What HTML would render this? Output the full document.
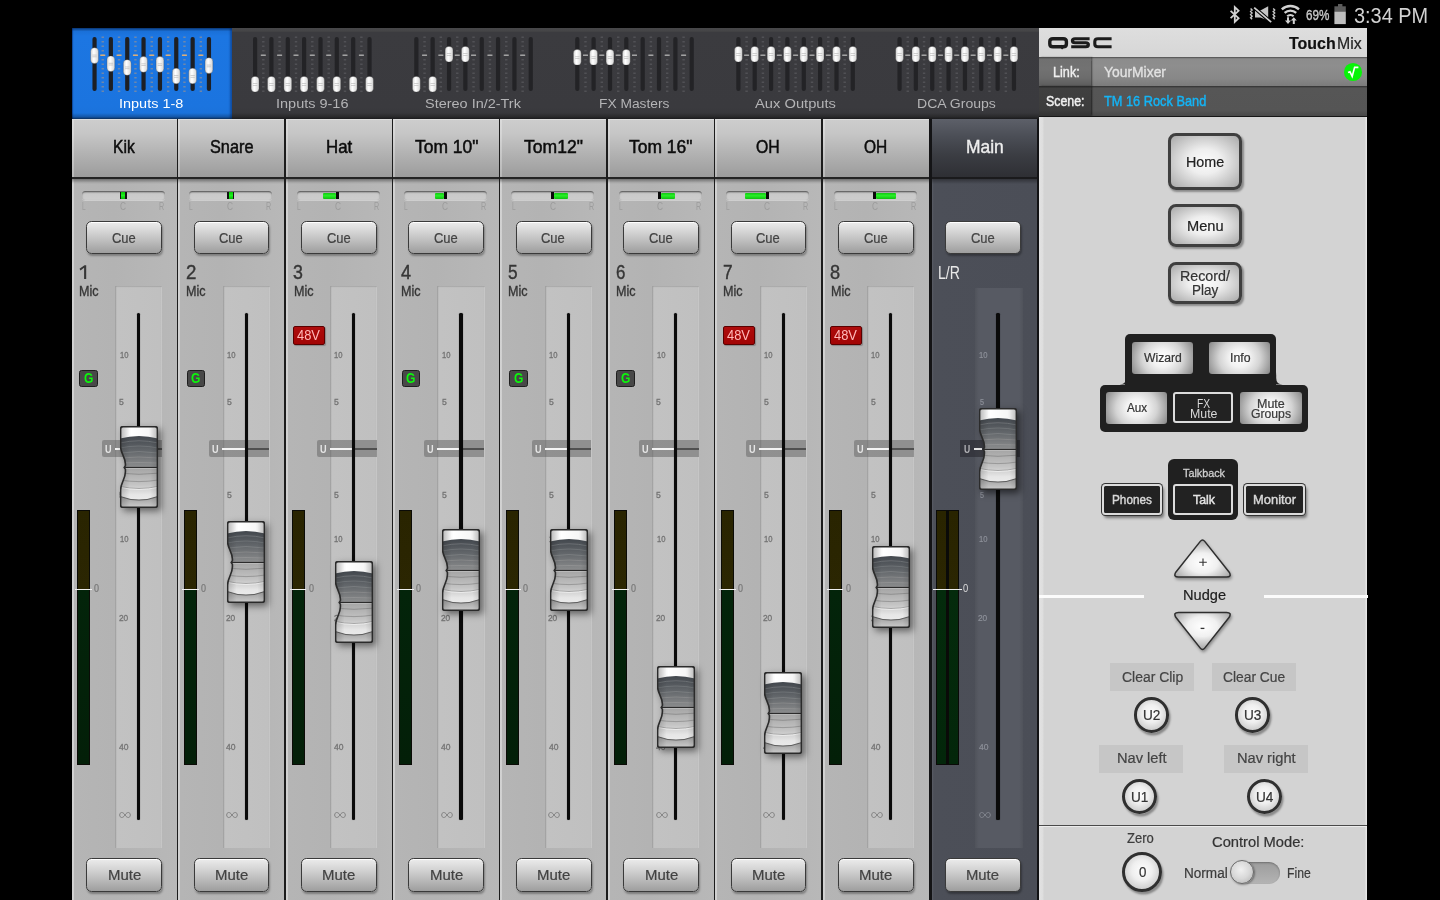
<!DOCTYPE html>
<html><head><meta charset="utf-8"><title>TouchMix</title>
<style>
html,body{margin:0;padding:0;background:#000;}
body{width:1440px;height:900px;position:relative;overflow:hidden;font-family:"Liberation Sans",sans-serif;}
.t{position:absolute;white-space:nowrap;line-height:1;transform-origin:0 0;-webkit-text-stroke:.22px;}
.abs{position:absolute;}
.btn{position:absolute;box-sizing:border-box;border:1.7px solid #3a3a3a;border-radius:5.5px;
 background:linear-gradient(#ececec 0%,#d2d2d2 35%,#9e9e9e 100%);
 box-shadow:1px 2px 2px rgba(0,0,0,.30), inset 0 1px 0 #fff;}
.fp{position:absolute;background:linear-gradient(90deg,#b6b6b6 0,#c2c2c2 5%,#c0c0c0 95%,#bcbcbc 100%);box-shadow:inset 1px 1px 1px rgba(0,0,0,.13), inset -1px 0 0 rgba(255,255,255,.15);}
.fpm{position:absolute;background:linear-gradient(90deg,#50535b 0,#575a63 8%,#575a63 92%,#50535b 100%);}
.trk{position:absolute;width:3.4px;background:#0a0a0a;border-radius:1.5px;box-shadow:0 0 1px rgba(0,0,0,.6);}
.sq{position:absolute;box-sizing:border-box;border:3.8px solid #3f3f3f;border-radius:8px;
 background:radial-gradient(ellipse at 50% 50%,#fbfbfb 0%,#eeeeee 35%,#a9a9a9 100%);
 box-shadow:1.5px 2px 2px rgba(0,0,0,.35);}
.lb{position:absolute;border-radius:3px;
 background:radial-gradient(ellipse 56% 95% at 50% 50%,#ffffff 0%,#f2f2f2 30%,#d4d4d4 60%,#8c8c8c 100%);}
.db{position:absolute;box-sizing:border-box;background:#222;border:2px solid #dcdcdc;border-radius:3px;}
.dbo{position:absolute;box-sizing:border-box;background:#222;border:2px solid #dcdcdc;border-radius:3.5px;
 box-shadow:0 0 0 1px #333, 2px 3px 3px rgba(0,0,0,.45);}
.lab{position:absolute;background:#c6c6c6;}
.circ{position:absolute;box-sizing:border-box;border:3.3px solid #2f2f2f;border-radius:50%;
 background:radial-gradient(circle at 50% 45%,#fdfdfd 0%,#efefef 40%,#b6b6b6 100%);
 box-shadow:1.5px 2.5px 2px rgba(0,0,0,.35);}
</style></head><body>

<svg width="0" height="0" style="position:absolute">
<defs>
 <linearGradient id="kd" x1="0" y1="0" x2="0" y2="1">
  <stop offset="0" stop-color="#42474d"/><stop offset=".45" stop-color="#62666a"/><stop offset="1" stop-color="#8c8d8e"/>
 </linearGradient>
 <linearGradient id="kl" x1="0" y1="0" x2="0" y2="1">
  <stop offset="0" stop-color="#a4a4a4"/><stop offset=".5" stop-color="#c4c4c4"/><stop offset=".8" stop-color="#e6e6e6"/><stop offset="1" stop-color="#ececec"/>
 </linearGradient>
 <linearGradient id="kb" x1="0" y1="0" x2="0" y2="1">
  <stop offset="0" stop-color="#9c9c9c"/><stop offset="1" stop-color="#cecece"/>
 </linearGradient>
 <linearGradient id="kc" x1="0" y1="0" x2="1" y2="0">
  <stop offset="0" stop-color="#dcdcdc"/><stop offset=".3" stop-color="#ffffff"/><stop offset=".75" stop-color="#f6f6f6"/><stop offset="1" stop-color="#d0d0d0"/>
 </linearGradient>
 <linearGradient id="ksh" x1="0" y1="0" x2="1" y2="0">
  <stop offset="0" stop-color="#000" stop-opacity=".18"/><stop offset=".25" stop-color="#000" stop-opacity="0"/>
  <stop offset=".8" stop-color="#000" stop-opacity="0"/><stop offset="1" stop-color="#000" stop-opacity=".12"/>
 </linearGradient>
 <clipPath id="kclip"><path d="M3,.6 H35 Q37.4,.6 37.4,3 V79 Q37.4,81.4 35,81.4 H3 Q.6,81.4 .6,79 V64 C.6,57 5.4,53 5.4,46 V43.4 L4.2,41.5 L5.4,39.6 V38 C5.4,31 .6,27 .6,21 V3 Q.6,.6 3,.6 Z"/></clipPath>
 <linearGradient id="mk" x1="0" y1="0" x2="1" y2="0">
  <stop offset="0" stop-color="#d8d8d8"/><stop offset=".4" stop-color="#ffffff"/><stop offset="1" stop-color="#d4d4d4"/>
 </linearGradient>
 <radialGradient id="tri" cx=".5" cy=".62" r=".6">
  <stop offset="0" stop-color="#ffffff"/><stop offset=".45" stop-color="#f0f0f0"/><stop offset="1" stop-color="#a8a8a8"/>
 </radialGradient>
 <radialGradient id="tri2" cx=".5" cy=".38" r=".6">
  <stop offset="0" stop-color="#ffffff"/><stop offset=".45" stop-color="#f0f0f0"/><stop offset="1" stop-color="#a8a8a8"/>
 </radialGradient>
</defs></svg>

<div style="position:absolute;left:0.00px;top:0.00px;width:1440.00px;height:28.00px;background:#000;"></div>
<div class="t" style="left:1306.40px;top:8.00px;font-size:14.24px;color:#c6c6c6;transform:scaleX(0.8210);-webkit-text-stroke:0.4px;">69%</div>
<div class="t" style="left:1353.70px;top:5.00px;font-size:21.80px;color:#d2d2d2;transform:scaleX(0.9127);-webkit-text-stroke:0;">3:34 PM</div>
<svg class="abs" style="left:1226px;top:2px" width="124" height="25" viewBox="0 0 124 25">
 <!-- bluetooth -->
 <path d="M4.6,8.8 L12.6,16.2 L8.8,19.8 V5.2 L12.6,8.8 L4.6,16.2" fill="none" stroke="#d2d2d2" stroke-width="1.8" stroke-linejoin="miter"/>
 <!-- vibrate / mute -->
 <path d="M24.6,6.4 l1.5,1.55 l-1.5,1.55 l1.5,1.55 l-1.5,1.55 l1.5,1.55 l-1.5,1.55 l1.5,1.55" fill="none" stroke="#c8c8c8" stroke-width="1.4"/>
 <path d="M47.2,6.4 l1.5,1.55 l-1.5,1.55 l1.5,1.55 l-1.5,1.55 l1.5,1.55 l-1.5,1.55 l1.5,1.55" fill="none" stroke="#c8c8c8" stroke-width="1.4"/>
 <path d="M29,8.6 H34.4 L42.2,4.2 V18.4 L34.4,15.6 H29 Z" fill="#c4c4c4"/>
 <path d="M28.2,5.6 L45.2,20.2" stroke="#000" stroke-width="3.8"/>
 <path d="M28.2,5.6 L45.2,20.2" stroke="#d2d2d2" stroke-width="1.7"/>
 <!-- wifi -->
 <path d="M55.8,7.4 A12.6,12.6 0 0 1 73,7.4" fill="none" stroke="#d2d2d2" stroke-width="2.4"/>
 <path d="M58.6,10.8 A8.6,8.6 0 0 1 70.2,10.8" fill="none" stroke="#d2d2d2" stroke-width="2.3"/>
 <path d="M61.2,14.2 A4.8,4.8 0 0 1 67.6,14.2" fill="none" stroke="#d2d2d2" stroke-width="2.2"/>
 <path d="M61,15.2 v3.4 h-2 l3,3.4 l3,-3.4 h-2 v-3.4 z" fill="#d2d2d2"/>
 <path d="M66.8,22 v-3.4 h-2 l3,-3.4 l3,3.4 h-2 v3.4 z" fill="#d2d2d2"/>
 <!-- battery -->
 <rect x="112" y="2" width="4.4" height="3" fill="#5c5c5c"/>
 <rect x="108.4" y="4.3" width="11.4" height="5.6" fill="#5c5c5c"/>
 <rect x="108.4" y="9.7" width="11.4" height="12.4" fill="#bebebe"/>
</svg>
<div style="position:absolute;left:72.00px;top:28.00px;width:966.70px;height:90.90px;background:linear-gradient(#474749 0,#454547 3px,#3b3b3f 4.5px,#3a3a3e 88%,#343437 100%);"></div>
<div style="position:absolute;left:72.00px;top:28.00px;width:160.00px;height:90.90px;background:linear-gradient(#0d3f80 0,#1a70d8 3.5px,#1c76e2 8px,#1b74df 86%,#1a70d8 100%);box-shadow:inset -2px 0 2px rgba(0,30,90,.45), inset 1px 0 1px rgba(0,30,90,.5);"></div>
<div style="position:absolute;left:72.00px;top:112.50px;width:966.70px;height:6.40px;background:linear-gradient(rgba(0,0,0,0),rgba(0,0,0,.22) 60%,rgba(0,0,0,.5));"></div>
<svg class="abs" style="left:72px;top:28px" width="967" height="90" viewBox="72 28 967 90"><rect x="92.45" y="37" width="4.2" height="54" rx="2" fill="#1d1f24"/><path d="M102.75,36.4 V92" stroke="#c09a78" stroke-width="2.4" stroke-dasharray="1.5 3" opacity=".5"/><rect x="100.25" y="54.5" width="5" height="1.5" fill="#e0b078" opacity=".95"/><rect x="108.75" y="37" width="4.2" height="54" rx="2" fill="#1d1f24"/><path d="M119.05,36.4 V92" stroke="#c09a78" stroke-width="2.4" stroke-dasharray="1.5 3" opacity=".5"/><rect x="116.55" y="54.5" width="5" height="1.5" fill="#e0b078" opacity=".95"/><rect x="125.15" y="37" width="4.2" height="54" rx="2" fill="#1d1f24"/><path d="M135.45,36.4 V92" stroke="#c09a78" stroke-width="2.4" stroke-dasharray="1.5 3" opacity=".5"/><rect x="132.95" y="54.5" width="5" height="1.5" fill="#e0b078" opacity=".95"/><rect x="141.45" y="37" width="4.2" height="54" rx="2" fill="#1d1f24"/><path d="M151.75,36.4 V92" stroke="#c09a78" stroke-width="2.4" stroke-dasharray="1.5 3" opacity=".5"/><rect x="149.25" y="54.5" width="5" height="1.5" fill="#e0b078" opacity=".95"/><rect x="157.85" y="37" width="4.2" height="54" rx="2" fill="#1d1f24"/><path d="M168.15,36.4 V92" stroke="#c09a78" stroke-width="2.4" stroke-dasharray="1.5 3" opacity=".5"/><rect x="165.65" y="54.5" width="5" height="1.5" fill="#e0b078" opacity=".95"/><rect x="174.15" y="37" width="4.2" height="54" rx="2" fill="#1d1f24"/><path d="M184.45,36.4 V92" stroke="#c09a78" stroke-width="2.4" stroke-dasharray="1.5 3" opacity=".5"/><rect x="181.95" y="54.5" width="5" height="1.5" fill="#e0b078" opacity=".95"/><rect x="190.55" y="37" width="4.2" height="54" rx="2" fill="#1d1f24"/><path d="M200.85,36.4 V92" stroke="#c09a78" stroke-width="2.4" stroke-dasharray="1.5 3" opacity=".5"/><rect x="198.35" y="54.5" width="5" height="1.5" fill="#e0b078" opacity=".95"/><rect x="206.85" y="37" width="4.2" height="54" rx="2" fill="#1d1f24"/><rect x="90.65" y="47.80" width="7.8" height="15.6" rx="3.7" fill="url(#mk)" stroke="#2a2a2a" stroke-opacity=".35" stroke-width=".7"/><rect x="92.35" y="54.70" width="4.4" height=".7" fill="#bdbdbd"/><rect x="92.35" y="56.50" width="4.4" height=".7" fill="#bdbdbd"/><rect x="106.95" y="55.95" width="7.8" height="15.6" rx="3.7" fill="url(#mk)" stroke="#2a2a2a" stroke-opacity=".35" stroke-width=".7"/><rect x="108.65" y="62.85" width="4.4" height=".7" fill="#bdbdbd"/><rect x="108.65" y="64.65" width="4.4" height=".7" fill="#bdbdbd"/><rect x="123.35" y="59.70" width="7.8" height="15.6" rx="3.7" fill="url(#mk)" stroke="#2a2a2a" stroke-opacity=".35" stroke-width=".7"/><rect x="125.05" y="66.60" width="4.4" height=".7" fill="#bdbdbd"/><rect x="125.05" y="68.40" width="4.4" height=".7" fill="#bdbdbd"/><rect x="139.65" y="56.60" width="7.8" height="15.6" rx="3.7" fill="url(#mk)" stroke="#2a2a2a" stroke-opacity=".35" stroke-width=".7"/><rect x="141.35" y="63.50" width="4.4" height=".7" fill="#bdbdbd"/><rect x="141.35" y="65.30" width="4.4" height=".7" fill="#bdbdbd"/><rect x="156.05" y="56.60" width="7.8" height="15.6" rx="3.7" fill="url(#mk)" stroke="#2a2a2a" stroke-opacity=".35" stroke-width=".7"/><rect x="157.75" y="63.50" width="4.4" height=".7" fill="#bdbdbd"/><rect x="157.75" y="65.30" width="4.4" height=".7" fill="#bdbdbd"/><rect x="172.35" y="68.20" width="7.8" height="15.6" rx="3.7" fill="url(#mk)" stroke="#2a2a2a" stroke-opacity=".35" stroke-width=".7"/><rect x="174.05" y="75.10" width="4.4" height=".7" fill="#bdbdbd"/><rect x="174.05" y="76.90" width="4.4" height=".7" fill="#bdbdbd"/><rect x="188.75" y="68.20" width="7.8" height="15.6" rx="3.7" fill="url(#mk)" stroke="#2a2a2a" stroke-opacity=".35" stroke-width=".7"/><rect x="190.45" y="75.10" width="4.4" height=".7" fill="#bdbdbd"/><rect x="190.45" y="76.90" width="4.4" height=".7" fill="#bdbdbd"/><rect x="205.05" y="57.80" width="7.8" height="15.6" rx="3.7" fill="url(#mk)" stroke="#2a2a2a" stroke-opacity=".35" stroke-width=".7"/><rect x="206.75" y="64.70" width="4.4" height=".7" fill="#bdbdbd"/><rect x="206.75" y="66.50" width="4.4" height=".7" fill="#bdbdbd"/><rect x="253.00" y="37" width="4.2" height="54" rx="2" fill="#232326"/><path d="M263.30,36.4 V92" stroke="#77777c" stroke-width="2.4" stroke-dasharray="1.5 3" opacity=".38"/><rect x="260.80" y="54.5" width="5" height="1.5" fill="#a8a8a8" opacity=".95"/><rect x="269.30" y="37" width="4.2" height="54" rx="2" fill="#232326"/><path d="M279.60,36.4 V92" stroke="#77777c" stroke-width="2.4" stroke-dasharray="1.5 3" opacity=".38"/><rect x="277.10" y="54.5" width="5" height="1.5" fill="#a8a8a8" opacity=".95"/><rect x="285.70" y="37" width="4.2" height="54" rx="2" fill="#232326"/><path d="M296.00,36.4 V92" stroke="#77777c" stroke-width="2.4" stroke-dasharray="1.5 3" opacity=".38"/><rect x="293.50" y="54.5" width="5" height="1.5" fill="#a8a8a8" opacity=".95"/><rect x="302.00" y="37" width="4.2" height="54" rx="2" fill="#232326"/><path d="M312.30,36.4 V92" stroke="#77777c" stroke-width="2.4" stroke-dasharray="1.5 3" opacity=".38"/><rect x="309.80" y="54.5" width="5" height="1.5" fill="#a8a8a8" opacity=".95"/><rect x="318.40" y="37" width="4.2" height="54" rx="2" fill="#232326"/><path d="M328.70,36.4 V92" stroke="#77777c" stroke-width="2.4" stroke-dasharray="1.5 3" opacity=".38"/><rect x="326.20" y="54.5" width="5" height="1.5" fill="#a8a8a8" opacity=".95"/><rect x="334.70" y="37" width="4.2" height="54" rx="2" fill="#232326"/><path d="M345.00,36.4 V92" stroke="#77777c" stroke-width="2.4" stroke-dasharray="1.5 3" opacity=".38"/><rect x="342.50" y="54.5" width="5" height="1.5" fill="#a8a8a8" opacity=".95"/><rect x="351.10" y="37" width="4.2" height="54" rx="2" fill="#232326"/><path d="M361.40,36.4 V92" stroke="#77777c" stroke-width="2.4" stroke-dasharray="1.5 3" opacity=".38"/><rect x="358.90" y="54.5" width="5" height="1.5" fill="#a8a8a8" opacity=".95"/><rect x="367.40" y="37" width="4.2" height="54" rx="2" fill="#232326"/><rect x="251.20" y="76.40" width="7.8" height="15.6" rx="3.7" fill="url(#mk)" stroke="#2a2a2a" stroke-opacity=".35" stroke-width=".7"/><rect x="252.90" y="83.30" width="4.4" height=".7" fill="#bdbdbd"/><rect x="252.90" y="85.10" width="4.4" height=".7" fill="#bdbdbd"/><rect x="267.50" y="76.40" width="7.8" height="15.6" rx="3.7" fill="url(#mk)" stroke="#2a2a2a" stroke-opacity=".35" stroke-width=".7"/><rect x="269.20" y="83.30" width="4.4" height=".7" fill="#bdbdbd"/><rect x="269.20" y="85.10" width="4.4" height=".7" fill="#bdbdbd"/><rect x="283.90" y="76.40" width="7.8" height="15.6" rx="3.7" fill="url(#mk)" stroke="#2a2a2a" stroke-opacity=".35" stroke-width=".7"/><rect x="285.60" y="83.30" width="4.4" height=".7" fill="#bdbdbd"/><rect x="285.60" y="85.10" width="4.4" height=".7" fill="#bdbdbd"/><rect x="300.20" y="76.40" width="7.8" height="15.6" rx="3.7" fill="url(#mk)" stroke="#2a2a2a" stroke-opacity=".35" stroke-width=".7"/><rect x="301.90" y="83.30" width="4.4" height=".7" fill="#bdbdbd"/><rect x="301.90" y="85.10" width="4.4" height=".7" fill="#bdbdbd"/><rect x="316.60" y="76.40" width="7.8" height="15.6" rx="3.7" fill="url(#mk)" stroke="#2a2a2a" stroke-opacity=".35" stroke-width=".7"/><rect x="318.30" y="83.30" width="4.4" height=".7" fill="#bdbdbd"/><rect x="318.30" y="85.10" width="4.4" height=".7" fill="#bdbdbd"/><rect x="332.90" y="76.40" width="7.8" height="15.6" rx="3.7" fill="url(#mk)" stroke="#2a2a2a" stroke-opacity=".35" stroke-width=".7"/><rect x="334.60" y="83.30" width="4.4" height=".7" fill="#bdbdbd"/><rect x="334.60" y="85.10" width="4.4" height=".7" fill="#bdbdbd"/><rect x="349.30" y="76.40" width="7.8" height="15.6" rx="3.7" fill="url(#mk)" stroke="#2a2a2a" stroke-opacity=".35" stroke-width=".7"/><rect x="351.00" y="83.30" width="4.4" height=".7" fill="#bdbdbd"/><rect x="351.00" y="85.10" width="4.4" height=".7" fill="#bdbdbd"/><rect x="365.60" y="76.40" width="7.8" height="15.6" rx="3.7" fill="url(#mk)" stroke="#2a2a2a" stroke-opacity=".35" stroke-width=".7"/><rect x="367.30" y="83.30" width="4.4" height=".7" fill="#bdbdbd"/><rect x="367.30" y="85.10" width="4.4" height=".7" fill="#bdbdbd"/><rect x="414.25" y="37" width="4.2" height="54" rx="2" fill="#232326"/><path d="M424.55,36.4 V92" stroke="#77777c" stroke-width="2.4" stroke-dasharray="1.5 3" opacity=".38"/><rect x="422.05" y="54.5" width="5" height="1.5" fill="#a8a8a8" opacity=".95"/><rect x="430.55" y="37" width="4.2" height="54" rx="2" fill="#232326"/><path d="M440.85,36.4 V92" stroke="#77777c" stroke-width="2.4" stroke-dasharray="1.5 3" opacity=".38"/><rect x="438.35" y="54.5" width="5" height="1.5" fill="#a8a8a8" opacity=".95"/><rect x="446.95" y="37" width="4.2" height="54" rx="2" fill="#232326"/><path d="M457.25,36.4 V92" stroke="#77777c" stroke-width="2.4" stroke-dasharray="1.5 3" opacity=".38"/><rect x="454.75" y="54.5" width="5" height="1.5" fill="#a8a8a8" opacity=".95"/><rect x="463.25" y="37" width="4.2" height="54" rx="2" fill="#232326"/><path d="M473.55,36.4 V92" stroke="#77777c" stroke-width="2.4" stroke-dasharray="1.5 3" opacity=".38"/><rect x="471.05" y="54.5" width="5" height="1.5" fill="#a8a8a8" opacity=".95"/><rect x="479.65" y="37" width="4.2" height="54" rx="2" fill="#232326"/><path d="M489.95,36.4 V92" stroke="#77777c" stroke-width="2.4" stroke-dasharray="1.5 3" opacity=".38"/><rect x="487.45" y="54.5" width="5" height="1.5" fill="#a8a8a8" opacity=".95"/><rect x="495.95" y="37" width="4.2" height="54" rx="2" fill="#232326"/><path d="M506.25,36.4 V92" stroke="#77777c" stroke-width="2.4" stroke-dasharray="1.5 3" opacity=".38"/><rect x="503.75" y="54.5" width="5" height="1.5" fill="#a8a8a8" opacity=".95"/><rect x="512.35" y="37" width="4.2" height="54" rx="2" fill="#232326"/><path d="M522.65,36.4 V92" stroke="#77777c" stroke-width="2.4" stroke-dasharray="1.5 3" opacity=".38"/><rect x="520.15" y="54.5" width="5" height="1.5" fill="#a8a8a8" opacity=".95"/><rect x="528.65" y="37" width="4.2" height="54" rx="2" fill="#232326"/><rect x="412.45" y="76.40" width="7.8" height="15.6" rx="3.7" fill="url(#mk)" stroke="#2a2a2a" stroke-opacity=".35" stroke-width=".7"/><rect x="414.15" y="83.30" width="4.4" height=".7" fill="#bdbdbd"/><rect x="414.15" y="85.10" width="4.4" height=".7" fill="#bdbdbd"/><rect x="428.75" y="76.40" width="7.8" height="15.6" rx="3.7" fill="url(#mk)" stroke="#2a2a2a" stroke-opacity=".35" stroke-width=".7"/><rect x="430.45" y="83.30" width="4.4" height=".7" fill="#bdbdbd"/><rect x="430.45" y="85.10" width="4.4" height=".7" fill="#bdbdbd"/><rect x="445.15" y="46.40" width="7.8" height="15.6" rx="3.7" fill="url(#mk)" stroke="#2a2a2a" stroke-opacity=".35" stroke-width=".7"/><rect x="446.85" y="53.30" width="4.4" height=".7" fill="#bdbdbd"/><rect x="446.85" y="55.10" width="4.4" height=".7" fill="#bdbdbd"/><rect x="461.45" y="46.40" width="7.8" height="15.6" rx="3.7" fill="url(#mk)" stroke="#2a2a2a" stroke-opacity=".35" stroke-width=".7"/><rect x="463.15" y="53.30" width="4.4" height=".7" fill="#bdbdbd"/><rect x="463.15" y="55.10" width="4.4" height=".7" fill="#bdbdbd"/><rect x="575.20" y="37" width="4.2" height="54" rx="2" fill="#232326"/><path d="M585.50,36.4 V92" stroke="#77777c" stroke-width="2.4" stroke-dasharray="1.5 3" opacity=".38"/><rect x="583.00" y="54.5" width="5" height="1.5" fill="#a8a8a8" opacity=".95"/><rect x="591.50" y="37" width="4.2" height="54" rx="2" fill="#232326"/><path d="M601.80,36.4 V92" stroke="#77777c" stroke-width="2.4" stroke-dasharray="1.5 3" opacity=".38"/><rect x="599.30" y="54.5" width="5" height="1.5" fill="#a8a8a8" opacity=".95"/><rect x="607.90" y="37" width="4.2" height="54" rx="2" fill="#232326"/><path d="M618.20,36.4 V92" stroke="#77777c" stroke-width="2.4" stroke-dasharray="1.5 3" opacity=".38"/><rect x="615.70" y="54.5" width="5" height="1.5" fill="#a8a8a8" opacity=".95"/><rect x="624.20" y="37" width="4.2" height="54" rx="2" fill="#232326"/><path d="M634.50,36.4 V92" stroke="#77777c" stroke-width="2.4" stroke-dasharray="1.5 3" opacity=".38"/><rect x="632.00" y="54.5" width="5" height="1.5" fill="#a8a8a8" opacity=".95"/><rect x="640.60" y="37" width="4.2" height="54" rx="2" fill="#232326"/><path d="M650.90,36.4 V92" stroke="#77777c" stroke-width="2.4" stroke-dasharray="1.5 3" opacity=".38"/><rect x="648.40" y="54.5" width="5" height="1.5" fill="#a8a8a8" opacity=".95"/><rect x="656.90" y="37" width="4.2" height="54" rx="2" fill="#232326"/><path d="M667.20,36.4 V92" stroke="#77777c" stroke-width="2.4" stroke-dasharray="1.5 3" opacity=".38"/><rect x="664.70" y="54.5" width="5" height="1.5" fill="#a8a8a8" opacity=".95"/><rect x="673.30" y="37" width="4.2" height="54" rx="2" fill="#232326"/><path d="M683.60,36.4 V92" stroke="#77777c" stroke-width="2.4" stroke-dasharray="1.5 3" opacity=".38"/><rect x="681.10" y="54.5" width="5" height="1.5" fill="#a8a8a8" opacity=".95"/><rect x="689.60" y="37" width="4.2" height="54" rx="2" fill="#232326"/><rect x="573.40" y="49.50" width="7.8" height="15.6" rx="3.7" fill="url(#mk)" stroke="#2a2a2a" stroke-opacity=".35" stroke-width=".7"/><rect x="575.10" y="56.40" width="4.4" height=".7" fill="#bdbdbd"/><rect x="575.10" y="58.20" width="4.4" height=".7" fill="#bdbdbd"/><rect x="589.70" y="49.50" width="7.8" height="15.6" rx="3.7" fill="url(#mk)" stroke="#2a2a2a" stroke-opacity=".35" stroke-width=".7"/><rect x="591.40" y="56.40" width="4.4" height=".7" fill="#bdbdbd"/><rect x="591.40" y="58.20" width="4.4" height=".7" fill="#bdbdbd"/><rect x="606.10" y="49.50" width="7.8" height="15.6" rx="3.7" fill="url(#mk)" stroke="#2a2a2a" stroke-opacity=".35" stroke-width=".7"/><rect x="607.80" y="56.40" width="4.4" height=".7" fill="#bdbdbd"/><rect x="607.80" y="58.20" width="4.4" height=".7" fill="#bdbdbd"/><rect x="622.40" y="49.50" width="7.8" height="15.6" rx="3.7" fill="url(#mk)" stroke="#2a2a2a" stroke-opacity=".35" stroke-width=".7"/><rect x="624.10" y="56.40" width="4.4" height=".7" fill="#bdbdbd"/><rect x="624.10" y="58.20" width="4.4" height=".7" fill="#bdbdbd"/><rect x="736.30" y="37" width="4.2" height="54" rx="2" fill="#232326"/><path d="M746.60,36.4 V92" stroke="#77777c" stroke-width="2.4" stroke-dasharray="1.5 3" opacity=".38"/><rect x="744.10" y="54.5" width="5" height="1.5" fill="#a8a8a8" opacity=".95"/><rect x="752.60" y="37" width="4.2" height="54" rx="2" fill="#232326"/><path d="M762.90,36.4 V92" stroke="#77777c" stroke-width="2.4" stroke-dasharray="1.5 3" opacity=".38"/><rect x="760.40" y="54.5" width="5" height="1.5" fill="#a8a8a8" opacity=".95"/><rect x="769.00" y="37" width="4.2" height="54" rx="2" fill="#232326"/><path d="M779.30,36.4 V92" stroke="#77777c" stroke-width="2.4" stroke-dasharray="1.5 3" opacity=".38"/><rect x="776.80" y="54.5" width="5" height="1.5" fill="#a8a8a8" opacity=".95"/><rect x="785.30" y="37" width="4.2" height="54" rx="2" fill="#232326"/><path d="M795.60,36.4 V92" stroke="#77777c" stroke-width="2.4" stroke-dasharray="1.5 3" opacity=".38"/><rect x="793.10" y="54.5" width="5" height="1.5" fill="#a8a8a8" opacity=".95"/><rect x="801.70" y="37" width="4.2" height="54" rx="2" fill="#232326"/><path d="M812.00,36.4 V92" stroke="#77777c" stroke-width="2.4" stroke-dasharray="1.5 3" opacity=".38"/><rect x="809.50" y="54.5" width="5" height="1.5" fill="#a8a8a8" opacity=".95"/><rect x="818.00" y="37" width="4.2" height="54" rx="2" fill="#232326"/><path d="M828.30,36.4 V92" stroke="#77777c" stroke-width="2.4" stroke-dasharray="1.5 3" opacity=".38"/><rect x="825.80" y="54.5" width="5" height="1.5" fill="#a8a8a8" opacity=".95"/><rect x="834.40" y="37" width="4.2" height="54" rx="2" fill="#232326"/><path d="M844.70,36.4 V92" stroke="#77777c" stroke-width="2.4" stroke-dasharray="1.5 3" opacity=".38"/><rect x="842.20" y="54.5" width="5" height="1.5" fill="#a8a8a8" opacity=".95"/><rect x="850.70" y="37" width="4.2" height="54" rx="2" fill="#232326"/><rect x="734.50" y="46.40" width="7.8" height="15.6" rx="3.7" fill="url(#mk)" stroke="#2a2a2a" stroke-opacity=".35" stroke-width=".7"/><rect x="736.20" y="53.30" width="4.4" height=".7" fill="#bdbdbd"/><rect x="736.20" y="55.10" width="4.4" height=".7" fill="#bdbdbd"/><rect x="750.80" y="46.40" width="7.8" height="15.6" rx="3.7" fill="url(#mk)" stroke="#2a2a2a" stroke-opacity=".35" stroke-width=".7"/><rect x="752.50" y="53.30" width="4.4" height=".7" fill="#bdbdbd"/><rect x="752.50" y="55.10" width="4.4" height=".7" fill="#bdbdbd"/><rect x="767.20" y="46.40" width="7.8" height="15.6" rx="3.7" fill="url(#mk)" stroke="#2a2a2a" stroke-opacity=".35" stroke-width=".7"/><rect x="768.90" y="53.30" width="4.4" height=".7" fill="#bdbdbd"/><rect x="768.90" y="55.10" width="4.4" height=".7" fill="#bdbdbd"/><rect x="783.50" y="46.40" width="7.8" height="15.6" rx="3.7" fill="url(#mk)" stroke="#2a2a2a" stroke-opacity=".35" stroke-width=".7"/><rect x="785.20" y="53.30" width="4.4" height=".7" fill="#bdbdbd"/><rect x="785.20" y="55.10" width="4.4" height=".7" fill="#bdbdbd"/><rect x="799.90" y="46.40" width="7.8" height="15.6" rx="3.7" fill="url(#mk)" stroke="#2a2a2a" stroke-opacity=".35" stroke-width=".7"/><rect x="801.60" y="53.30" width="4.4" height=".7" fill="#bdbdbd"/><rect x="801.60" y="55.10" width="4.4" height=".7" fill="#bdbdbd"/><rect x="816.20" y="46.40" width="7.8" height="15.6" rx="3.7" fill="url(#mk)" stroke="#2a2a2a" stroke-opacity=".35" stroke-width=".7"/><rect x="817.90" y="53.30" width="4.4" height=".7" fill="#bdbdbd"/><rect x="817.90" y="55.10" width="4.4" height=".7" fill="#bdbdbd"/><rect x="832.60" y="46.40" width="7.8" height="15.6" rx="3.7" fill="url(#mk)" stroke="#2a2a2a" stroke-opacity=".35" stroke-width=".7"/><rect x="834.30" y="53.30" width="4.4" height=".7" fill="#bdbdbd"/><rect x="834.30" y="55.10" width="4.4" height=".7" fill="#bdbdbd"/><rect x="848.90" y="46.40" width="7.8" height="15.6" rx="3.7" fill="url(#mk)" stroke="#2a2a2a" stroke-opacity=".35" stroke-width=".7"/><rect x="850.60" y="53.30" width="4.4" height=".7" fill="#bdbdbd"/><rect x="850.60" y="55.10" width="4.4" height=".7" fill="#bdbdbd"/><rect x="897.45" y="37" width="4.2" height="54" rx="2" fill="#232326"/><path d="M907.75,36.4 V92" stroke="#77777c" stroke-width="2.4" stroke-dasharray="1.5 3" opacity=".38"/><rect x="905.25" y="54.5" width="5" height="1.5" fill="#a8a8a8" opacity=".95"/><rect x="913.75" y="37" width="4.2" height="54" rx="2" fill="#232326"/><path d="M924.05,36.4 V92" stroke="#77777c" stroke-width="2.4" stroke-dasharray="1.5 3" opacity=".38"/><rect x="921.55" y="54.5" width="5" height="1.5" fill="#a8a8a8" opacity=".95"/><rect x="930.15" y="37" width="4.2" height="54" rx="2" fill="#232326"/><path d="M940.45,36.4 V92" stroke="#77777c" stroke-width="2.4" stroke-dasharray="1.5 3" opacity=".38"/><rect x="937.95" y="54.5" width="5" height="1.5" fill="#a8a8a8" opacity=".95"/><rect x="946.45" y="37" width="4.2" height="54" rx="2" fill="#232326"/><path d="M956.75,36.4 V92" stroke="#77777c" stroke-width="2.4" stroke-dasharray="1.5 3" opacity=".38"/><rect x="954.25" y="54.5" width="5" height="1.5" fill="#a8a8a8" opacity=".95"/><rect x="962.85" y="37" width="4.2" height="54" rx="2" fill="#232326"/><path d="M973.15,36.4 V92" stroke="#77777c" stroke-width="2.4" stroke-dasharray="1.5 3" opacity=".38"/><rect x="970.65" y="54.5" width="5" height="1.5" fill="#a8a8a8" opacity=".95"/><rect x="979.15" y="37" width="4.2" height="54" rx="2" fill="#232326"/><path d="M989.45,36.4 V92" stroke="#77777c" stroke-width="2.4" stroke-dasharray="1.5 3" opacity=".38"/><rect x="986.95" y="54.5" width="5" height="1.5" fill="#a8a8a8" opacity=".95"/><rect x="995.55" y="37" width="4.2" height="54" rx="2" fill="#232326"/><path d="M1005.85,36.4 V92" stroke="#77777c" stroke-width="2.4" stroke-dasharray="1.5 3" opacity=".38"/><rect x="1003.35" y="54.5" width="5" height="1.5" fill="#a8a8a8" opacity=".95"/><rect x="1011.85" y="37" width="4.2" height="54" rx="2" fill="#232326"/><rect x="895.65" y="46.40" width="7.8" height="15.6" rx="3.7" fill="url(#mk)" stroke="#2a2a2a" stroke-opacity=".35" stroke-width=".7"/><rect x="897.35" y="53.30" width="4.4" height=".7" fill="#bdbdbd"/><rect x="897.35" y="55.10" width="4.4" height=".7" fill="#bdbdbd"/><rect x="911.95" y="46.40" width="7.8" height="15.6" rx="3.7" fill="url(#mk)" stroke="#2a2a2a" stroke-opacity=".35" stroke-width=".7"/><rect x="913.65" y="53.30" width="4.4" height=".7" fill="#bdbdbd"/><rect x="913.65" y="55.10" width="4.4" height=".7" fill="#bdbdbd"/><rect x="928.35" y="46.40" width="7.8" height="15.6" rx="3.7" fill="url(#mk)" stroke="#2a2a2a" stroke-opacity=".35" stroke-width=".7"/><rect x="930.05" y="53.30" width="4.4" height=".7" fill="#bdbdbd"/><rect x="930.05" y="55.10" width="4.4" height=".7" fill="#bdbdbd"/><rect x="944.65" y="46.40" width="7.8" height="15.6" rx="3.7" fill="url(#mk)" stroke="#2a2a2a" stroke-opacity=".35" stroke-width=".7"/><rect x="946.35" y="53.30" width="4.4" height=".7" fill="#bdbdbd"/><rect x="946.35" y="55.10" width="4.4" height=".7" fill="#bdbdbd"/><rect x="961.05" y="46.40" width="7.8" height="15.6" rx="3.7" fill="url(#mk)" stroke="#2a2a2a" stroke-opacity=".35" stroke-width=".7"/><rect x="962.75" y="53.30" width="4.4" height=".7" fill="#bdbdbd"/><rect x="962.75" y="55.10" width="4.4" height=".7" fill="#bdbdbd"/><rect x="977.35" y="46.40" width="7.8" height="15.6" rx="3.7" fill="url(#mk)" stroke="#2a2a2a" stroke-opacity=".35" stroke-width=".7"/><rect x="979.05" y="53.30" width="4.4" height=".7" fill="#bdbdbd"/><rect x="979.05" y="55.10" width="4.4" height=".7" fill="#bdbdbd"/><rect x="993.75" y="46.40" width="7.8" height="15.6" rx="3.7" fill="url(#mk)" stroke="#2a2a2a" stroke-opacity=".35" stroke-width=".7"/><rect x="995.45" y="53.30" width="4.4" height=".7" fill="#bdbdbd"/><rect x="995.45" y="55.10" width="4.4" height=".7" fill="#bdbdbd"/><rect x="1010.05" y="46.40" width="7.8" height="15.6" rx="3.7" fill="url(#mk)" stroke="#2a2a2a" stroke-opacity=".35" stroke-width=".7"/><rect x="1011.75" y="53.30" width="4.4" height=".7" fill="#bdbdbd"/><rect x="1011.75" y="55.10" width="4.4" height=".7" fill="#bdbdbd"/></svg>
<div class="t" style="left:119.40px;top:97.00px;font-size:13.66px;color:#ffffff;transform:scaleX(1.0591);-webkit-text-stroke:0;">Inputs 1-8</div>
<div class="t" style="left:276.00px;top:97.00px;font-size:13.66px;color:#b4b4b6;transform:scaleX(1.0606);-webkit-text-stroke:0;">Inputs 9-16</div>
<div class="t" style="left:425.00px;top:97.00px;font-size:13.66px;color:#b4b4b6;transform:scaleX(1.0591);-webkit-text-stroke:0;">Stereo In/2-Trk</div>
<div class="t" style="left:599.40px;top:97.00px;font-size:13.66px;color:#b4b4b6;transform:scaleX(1.0080);-webkit-text-stroke:0;">FX Masters</div>
<div class="t" style="left:754.90px;top:97.00px;font-size:13.66px;color:#b4b4b6;transform:scaleX(1.0773);-webkit-text-stroke:0;">Aux Outputs</div>
<div class="t" style="left:917.30px;top:97.00px;font-size:13.66px;color:#b4b4b6;transform:scaleX(1.0288);-webkit-text-stroke:0;">DCA Groups</div>
<div style="position:absolute;left:72.00px;top:176.60px;width:860.00px;height:2.60px;background:#242424;"></div>
<div style="position:absolute;left:72.00px;top:119.00px;width:104.80px;height:58.20px;background:linear-gradient(#cdcdcd 0%,#c6c6c6 25%,#b2b2b2 60%,#9c9c9c 100%);box-shadow:inset 0 1px 0 #dcdcdc, inset 2px 0 0 rgba(255,255,255,.28);"></div>
<div style="position:absolute;left:176.70px;top:119.00px;width:1.50px;height:781.00px;background:#1c1c1c;"></div>
<div style="position:absolute;left:72.00px;top:179.00px;width:104.80px;height:721.00px;background:linear-gradient(90deg,#d2d2d2 0,#d0d0d0 1.7px,#b5b5b5 2.3px,#b3b3b3 40%,#b8b8b8 100%);"></div>
<div style="position:absolute;left:72.00px;top:179.00px;width:104.80px;height:4.50px;background:linear-gradient(rgba(0,0,0,.38),rgba(0,0,0,.08) 70%,rgba(0,0,0,0));"></div>
<div class="t" style="left:113.25px;top:138.00px;font-size:18.17px;color:#0c0c0c;transform:scaleX(0.8606);-webkit-text-stroke:0.5px;">Kik</div>
<div style="position:absolute;left:81.80px;top:191.40px;width:83.10px;height:8.20px;border-radius:3.5px;background:linear-gradient(#9a9a9a 0%,#c9c9c9 30%,#cdcdcd 100%);box-shadow:inset 0 1px 1.5px rgba(0,0,0,.45), 0 1px 0 rgba(255,255,255,.35);"></div>
<div style="position:absolute;left:119.50px;top:192.30px;width:7.60px;height:7.00px;background:#111;"></div>
<div style="position:absolute;left:121.30px;top:192.30px;width:4.00px;height:7.00px;background:linear-gradient(#0c0 0,#1ef01e 50%,#0b0 100%);"></div>
<div class="t" style="left:81.90px;top:202.00px;font-size:10.17px;color:#9c9c9c;transform:scaleX(0.6541);-webkit-text-stroke:0px;">L</div>
<div class="t" style="left:120.00px;top:202.00px;font-size:10.17px;color:#9c9c9c;transform:scaleX(0.8168);-webkit-text-stroke:0px;">C</div>
<div class="t" style="left:159.00px;top:202.00px;font-size:10.17px;color:#9c9c9c;transform:scaleX(0.7079);-webkit-text-stroke:0px;">R</div>
<div class="btn" style="position:absolute;left:86.20px;top:220.80px;width:75.80px;height:33.40px;"></div>
<div class="t" style="left:111.80px;top:231.00px;font-size:14.53px;color:#424242;transform:scaleX(0.8928);">Cue</div>
<svg class="abs" style="left:78px;top:263px" width="10" height="18" viewBox="78 263 10 18"><path d="M79.5,268.7 L84.5,265.2 H86.2 V278.9 H84.1 V267.7 L80.5,270.4 Z" fill="#363636"/></svg>
<div class="t" style="left:78.80px;top:284.00px;font-size:14.53px;color:#363636;transform:scaleX(0.8672);-webkit-text-stroke:0.35px;">Mic</div>
<div class="fp" style="position:absolute;left:115.10px;top:286.20px;width:47.30px;height:561.80px;"></div>
<div class="t" style="left:119.50px;top:350.00px;font-size:9.74px;color:#747474;transform:scaleX(0.7849);-webkit-text-stroke:0.35px;">10</div>
<div class="t" style="left:119.40px;top:397.00px;font-size:9.74px;color:#747474;transform:scaleX(0.8865);-webkit-text-stroke:0.35px;">5</div>
<div class="t" style="left:119.40px;top:490.00px;font-size:9.74px;color:#747474;transform:scaleX(0.8865);-webkit-text-stroke:0.35px;">5</div>
<div class="t" style="left:119.50px;top:534.00px;font-size:9.74px;color:#747474;transform:scaleX(0.7849);-webkit-text-stroke:0.35px;">10</div>
<div class="t" style="left:118.75px;top:613.00px;font-size:9.74px;color:#747474;transform:scaleX(0.8542);-webkit-text-stroke:0.35px;">20</div>
<div class="t" style="left:119.00px;top:742.00px;font-size:9.74px;color:#747474;transform:scaleX(0.8773);-webkit-text-stroke:0.35px;">40</div>
<svg class="abs" style="left:118.80px;top:810.5px" width="13" height="8" viewBox="0 0 13 8"><path d="M6,4 C4.7,1.9 3.5,1.5 2.6,1.5 C1.5,1.5 .7,2.6 .7,4 C.7,5.4 1.5,6.5 2.6,6.5 C3.5,6.5 4.7,6.1 6,4 C7.3,1.9 8.5,1.5 9.4,1.5 C10.5,1.5 11.3,2.6 11.3,4 C11.3,5.4 10.5,6.5 9.4,6.5 C8.5,6.5 7.3,6.1 6,4 Z" fill="none" stroke="#747474" stroke-width=".95" opacity=".85"/></svg>
<div style="position:absolute;left:102.00px;top:440.10px;width:59.80px;height:17.00px;background:rgba(100,100,100,.52);border-radius:2px 0 0 2px;"></div>
<div class="t" style="left:105.00px;top:444.00px;font-size:11.05px;color:#e6e6e6;transform:scaleX(0.8275);font-weight:bold;-webkit-text-stroke:0;">U</div>
<div style="position:absolute;left:115.00px;top:447.80px;width:23.00px;height:2.00px;background:#f4f4f4;"></div>
<div style="position:absolute;left:140.00px;top:447.90px;width:21.80px;height:1.80px;background:#505050;"></div>
<div class="trk" style="position:absolute;left:137.10px;top:312.50px;width:3.40px;height:507.00px;"></div>
<div style="position:absolute;left:79.30px;top:370.00px;width:18.70px;height:17.20px;background:#484848;border:1.3px solid #1e1e1e;border-bottom-width:1.8px;box-sizing:border-box;border-radius:2.5px;"></div>
<div class="t" style="left:83.90px;top:371.00px;font-size:14.83px;color:#0cf80c;transform:scaleX(0.8150);font-weight:bold;-webkit-text-stroke:0;">G</div>
<div style="position:absolute;left:76.80px;top:510.20px;width:13.10px;height:255.00px;background:linear-gradient(#292400 0,#2b2602 78.6px,#03240a 79.2px,#031f08 100%);border:1.6px solid #0b0b07;box-sizing:border-box;"></div>
<div style="position:absolute;left:75.00px;top:588.80px;width:16.50px;height:1.50px;background:#f0f0f0;"></div>
<div class="t" style="left:93.75px;top:583.00px;font-size:10.76px;color:#787878;transform:scaleX(0.8361);">0</div>
<svg class="abs" style="left:120.00px;top:426.05px;filter:drop-shadow(3px 3px 3.5px rgba(0,0,0,.5))" width="38" height="82" viewBox="0 0 38 82">  <g clip-path="url(#kclip)">
   <rect x="0" y="0" width="38" height="82" fill="#777"/>
   <rect x="0" y="0" width="38" height="13" fill="url(#kc)"/>
   <path d="M0,12.5 Q19,7.5 38,12.5 V41.5 H0 Z" fill="url(#kd)"/>
   <path d="M0,17 Q19,12.5 38,17" stroke="#7d8083" stroke-width=".8" fill="none" opacity=".8"/>
   <path d="M0,22 Q19,18 38,22" stroke="#85888a" stroke-width=".7" fill="none" opacity=".7"/>
   <path d="M0,27 Q19,24 38,27" stroke="#8e9092" stroke-width=".7" fill="none" opacity=".7"/>
   <path d="M0,32 Q19,30 38,32" stroke="#999" stroke-width=".7" fill="none" opacity=".7"/>
   <path d="M0,37 Q19,36 38,37" stroke="#a2a2a2" stroke-width=".7" fill="none" opacity=".7"/>
   <rect x="0" y="41.5" width="38" height="34" fill="url(#kl)"/>
   <path d="M0,47.2 Q19,49.4 38,47.2" stroke="#858585" stroke-width=".9" fill="none" opacity=".85"/>
   <path d="M0,54 Q19,57.2 38,54" stroke="#8c8c8c" stroke-width=".9" fill="none" opacity=".85"/>
   <path d="M0,60.4 Q19,64.6 38,60.4" stroke="#999" stroke-width=".9" fill="none" opacity=".85"/>
   <path d="M0,61.4 Q19,65.6 38,61.4" stroke="#f4f4f4" stroke-width=".9" fill="none" opacity=".8"/>
   <path d="M0,70.4 Q19,77.6 38,70.4 V82 H0 Z" fill="url(#kb)"/>
   <path d="M0,70.4 Q19,77.6 38,70.4" stroke="#5e5e5e" stroke-width="1.1" fill="none"/>
   <rect x="0" y="40.9" width="38" height="1.2" fill="#2c2c2c"/>
   <rect x="0" y="42.1" width="38" height=".9" fill="#c8c8c8" opacity=".8"/>
   <rect x="0" y="0" width="38" height="82" fill="url(#ksh)"/>
  </g>
  <path d="M3,.6 H35 Q37.4,.6 37.4,3 V79 Q37.4,81.4 35,81.4 H3 Q.6,81.4 .6,79 V64 C.6,57 5.4,53 5.4,46 V43.4 L4.2,41.5 L5.4,39.6 V38 C5.4,31 .6,27 .6,21 V3 Q.6,.6 3,.6 Z" fill="none" stroke="#2b2b2b" stroke-width="1.6"/></svg>
<div class="btn" style="position:absolute;left:86.20px;top:858.00px;width:75.80px;height:33.50px;"></div>
<div class="t" style="left:107.60px;top:868.00px;font-size:14.53px;color:#424242;transform:scaleX(1.0306);">Mute</div>
<div style="position:absolute;left:178.10px;top:119.00px;width:106.10px;height:58.20px;background:linear-gradient(#cdcdcd 0%,#c6c6c6 25%,#b2b2b2 60%,#9c9c9c 100%);box-shadow:inset 0 1px 0 #dcdcdc, inset 2px 0 0 rgba(255,255,255,.28);"></div>
<div style="position:absolute;left:284.10px;top:119.00px;width:1.50px;height:781.00px;background:#1c1c1c;"></div>
<div style="position:absolute;left:178.10px;top:179.00px;width:106.10px;height:721.00px;background:linear-gradient(90deg,#d2d2d2 0,#d0d0d0 1.7px,#b5b5b5 2.3px,#b3b3b3 40%,#b8b8b8 100%);"></div>
<div style="position:absolute;left:178.10px;top:179.00px;width:106.10px;height:4.50px;background:linear-gradient(rgba(0,0,0,.38),rgba(0,0,0,.08) 70%,rgba(0,0,0,0));"></div>
<div class="t" style="left:209.50px;top:138.00px;font-size:18.17px;color:#0c0c0c;transform:scaleX(0.8974);-webkit-text-stroke:0.5px;">Snare</div>
<div style="position:absolute;left:189.20px;top:191.40px;width:83.10px;height:8.20px;border-radius:3.5px;background:linear-gradient(#9a9a9a 0%,#c9c9c9 30%,#cdcdcd 100%);box-shadow:inset 0 1px 1.5px rgba(0,0,0,.45), 0 1px 0 rgba(255,255,255,.35);"></div>
<div style="position:absolute;left:226.90px;top:192.30px;width:7.60px;height:7.00px;background:#111;"></div>
<div style="position:absolute;left:228.70px;top:192.30px;width:4.00px;height:7.00px;background:linear-gradient(#0c0 0,#1ef01e 50%,#0b0 100%);"></div>
<div class="t" style="left:189.30px;top:202.00px;font-size:10.17px;color:#9c9c9c;transform:scaleX(0.6541);-webkit-text-stroke:0px;">L</div>
<div class="t" style="left:227.40px;top:202.00px;font-size:10.17px;color:#9c9c9c;transform:scaleX(0.8168);-webkit-text-stroke:0px;">C</div>
<div class="t" style="left:266.40px;top:202.00px;font-size:10.17px;color:#9c9c9c;transform:scaleX(0.7079);-webkit-text-stroke:0px;">R</div>
<div class="btn" style="position:absolute;left:193.60px;top:220.80px;width:75.80px;height:33.40px;"></div>
<div class="t" style="left:219.20px;top:231.00px;font-size:14.53px;color:#424242;transform:scaleX(0.8928);">Cue</div>
<div class="t" style="left:185.80px;top:263.00px;font-size:19.48px;color:#363636;transform:scaleX(0.9604);-webkit-text-stroke:0.4px;">2</div>
<div class="t" style="left:186.20px;top:284.00px;font-size:14.53px;color:#363636;transform:scaleX(0.8672);-webkit-text-stroke:0.35px;">Mic</div>
<div class="fp" style="position:absolute;left:222.50px;top:286.20px;width:47.30px;height:561.80px;"></div>
<div class="t" style="left:226.90px;top:350.00px;font-size:9.74px;color:#747474;transform:scaleX(0.7849);-webkit-text-stroke:0.35px;">10</div>
<div class="t" style="left:226.80px;top:397.00px;font-size:9.74px;color:#747474;transform:scaleX(0.8865);-webkit-text-stroke:0.35px;">5</div>
<div class="t" style="left:226.80px;top:490.00px;font-size:9.74px;color:#747474;transform:scaleX(0.8865);-webkit-text-stroke:0.35px;">5</div>
<div class="t" style="left:226.90px;top:534.00px;font-size:9.74px;color:#747474;transform:scaleX(0.7849);-webkit-text-stroke:0.35px;">10</div>
<div class="t" style="left:226.15px;top:613.00px;font-size:9.74px;color:#747474;transform:scaleX(0.8542);-webkit-text-stroke:0.35px;">20</div>
<div class="t" style="left:226.40px;top:742.00px;font-size:9.74px;color:#747474;transform:scaleX(0.8773);-webkit-text-stroke:0.35px;">40</div>
<svg class="abs" style="left:226.20px;top:810.5px" width="13" height="8" viewBox="0 0 13 8"><path d="M6,4 C4.7,1.9 3.5,1.5 2.6,1.5 C1.5,1.5 .7,2.6 .7,4 C.7,5.4 1.5,6.5 2.6,6.5 C3.5,6.5 4.7,6.1 6,4 C7.3,1.9 8.5,1.5 9.4,1.5 C10.5,1.5 11.3,2.6 11.3,4 C11.3,5.4 10.5,6.5 9.4,6.5 C8.5,6.5 7.3,6.1 6,4 Z" fill="none" stroke="#747474" stroke-width=".95" opacity=".85"/></svg>
<div style="position:absolute;left:209.40px;top:440.10px;width:59.80px;height:17.00px;background:rgba(100,100,100,.52);border-radius:2px 0 0 2px;"></div>
<div class="t" style="left:212.40px;top:444.00px;font-size:11.05px;color:#e6e6e6;transform:scaleX(0.8275);font-weight:bold;-webkit-text-stroke:0;">U</div>
<div style="position:absolute;left:222.40px;top:447.80px;width:23.00px;height:2.00px;background:#f4f4f4;"></div>
<div style="position:absolute;left:247.40px;top:447.90px;width:21.80px;height:1.80px;background:#505050;"></div>
<div class="trk" style="position:absolute;left:244.50px;top:312.50px;width:3.40px;height:507.00px;"></div>
<div style="position:absolute;left:186.70px;top:370.00px;width:18.70px;height:17.20px;background:#484848;border:1.3px solid #1e1e1e;border-bottom-width:1.8px;box-sizing:border-box;border-radius:2.5px;"></div>
<div class="t" style="left:191.30px;top:371.00px;font-size:14.83px;color:#0cf80c;transform:scaleX(0.8150);font-weight:bold;-webkit-text-stroke:0;">G</div>
<div style="position:absolute;left:184.20px;top:510.20px;width:13.10px;height:255.00px;background:linear-gradient(#292400 0,#2b2602 78.6px,#03240a 79.2px,#031f08 100%);border:1.6px solid #0b0b07;box-sizing:border-box;"></div>
<div style="position:absolute;left:182.40px;top:588.80px;width:16.50px;height:1.50px;background:#f0f0f0;"></div>
<div class="t" style="left:201.15px;top:583.00px;font-size:10.76px;color:#787878;transform:scaleX(0.8361);">0</div>
<svg class="abs" style="left:227.40px;top:521.05px;filter:drop-shadow(3px 3px 3.5px rgba(0,0,0,.5))" width="38" height="82" viewBox="0 0 38 82">  <g clip-path="url(#kclip)">
   <rect x="0" y="0" width="38" height="82" fill="#777"/>
   <rect x="0" y="0" width="38" height="13" fill="url(#kc)"/>
   <path d="M0,12.5 Q19,7.5 38,12.5 V41.5 H0 Z" fill="url(#kd)"/>
   <path d="M0,17 Q19,12.5 38,17" stroke="#7d8083" stroke-width=".8" fill="none" opacity=".8"/>
   <path d="M0,22 Q19,18 38,22" stroke="#85888a" stroke-width=".7" fill="none" opacity=".7"/>
   <path d="M0,27 Q19,24 38,27" stroke="#8e9092" stroke-width=".7" fill="none" opacity=".7"/>
   <path d="M0,32 Q19,30 38,32" stroke="#999" stroke-width=".7" fill="none" opacity=".7"/>
   <path d="M0,37 Q19,36 38,37" stroke="#a2a2a2" stroke-width=".7" fill="none" opacity=".7"/>
   <rect x="0" y="41.5" width="38" height="34" fill="url(#kl)"/>
   <path d="M0,47.2 Q19,49.4 38,47.2" stroke="#858585" stroke-width=".9" fill="none" opacity=".85"/>
   <path d="M0,54 Q19,57.2 38,54" stroke="#8c8c8c" stroke-width=".9" fill="none" opacity=".85"/>
   <path d="M0,60.4 Q19,64.6 38,60.4" stroke="#999" stroke-width=".9" fill="none" opacity=".85"/>
   <path d="M0,61.4 Q19,65.6 38,61.4" stroke="#f4f4f4" stroke-width=".9" fill="none" opacity=".8"/>
   <path d="M0,70.4 Q19,77.6 38,70.4 V82 H0 Z" fill="url(#kb)"/>
   <path d="M0,70.4 Q19,77.6 38,70.4" stroke="#5e5e5e" stroke-width="1.1" fill="none"/>
   <rect x="0" y="40.9" width="38" height="1.2" fill="#2c2c2c"/>
   <rect x="0" y="42.1" width="38" height=".9" fill="#c8c8c8" opacity=".8"/>
   <rect x="0" y="0" width="38" height="82" fill="url(#ksh)"/>
  </g>
  <path d="M3,.6 H35 Q37.4,.6 37.4,3 V79 Q37.4,81.4 35,81.4 H3 Q.6,81.4 .6,79 V64 C.6,57 5.4,53 5.4,46 V43.4 L4.2,41.5 L5.4,39.6 V38 C5.4,31 .6,27 .6,21 V3 Q.6,.6 3,.6 Z" fill="none" stroke="#2b2b2b" stroke-width="1.6"/></svg>
<div class="btn" style="position:absolute;left:193.60px;top:858.00px;width:75.80px;height:33.50px;"></div>
<div class="t" style="left:215.00px;top:868.00px;font-size:14.53px;color:#424242;transform:scaleX(1.0306);">Mute</div>
<div style="position:absolute;left:285.50px;top:119.00px;width:106.10px;height:58.20px;background:linear-gradient(#cdcdcd 0%,#c6c6c6 25%,#b2b2b2 60%,#9c9c9c 100%);box-shadow:inset 0 1px 0 #dcdcdc, inset 2px 0 0 rgba(255,255,255,.28);"></div>
<div style="position:absolute;left:391.50px;top:119.00px;width:1.50px;height:781.00px;background:#1c1c1c;"></div>
<div style="position:absolute;left:285.50px;top:179.00px;width:106.10px;height:721.00px;background:linear-gradient(90deg,#d2d2d2 0,#d0d0d0 1.7px,#b5b5b5 2.3px,#b3b3b3 40%,#b8b8b8 100%);"></div>
<div style="position:absolute;left:285.50px;top:179.00px;width:106.10px;height:4.50px;background:linear-gradient(rgba(0,0,0,.38),rgba(0,0,0,.08) 70%,rgba(0,0,0,0));"></div>
<div class="t" style="left:325.75px;top:138.00px;font-size:18.17px;color:#0c0c0c;transform:scaleX(0.9285);-webkit-text-stroke:0.5px;">Hat</div>
<div style="position:absolute;left:296.60px;top:191.40px;width:83.10px;height:8.20px;border-radius:3.5px;background:linear-gradient(#9a9a9a 0%,#c9c9c9 30%,#cdcdcd 100%);box-shadow:inset 0 1px 1.5px rgba(0,0,0,.45), 0 1px 0 rgba(255,255,255,.35);"></div>
<div style="position:absolute;left:322.50px;top:192.60px;width:13.80px;height:6.60px;background:linear-gradient(#12c812 0,#28f028 45%,#10c010 100%);border-radius:1px;"></div>
<div style="position:absolute;left:336.30px;top:192.30px;width:3.20px;height:7.00px;background:#0a0a0a;"></div>
<div class="t" style="left:296.70px;top:202.00px;font-size:10.17px;color:#9c9c9c;transform:scaleX(0.6541);-webkit-text-stroke:0px;">L</div>
<div class="t" style="left:334.80px;top:202.00px;font-size:10.17px;color:#9c9c9c;transform:scaleX(0.8168);-webkit-text-stroke:0px;">C</div>
<div class="t" style="left:373.80px;top:202.00px;font-size:10.17px;color:#9c9c9c;transform:scaleX(0.7079);-webkit-text-stroke:0px;">R</div>
<div class="btn" style="position:absolute;left:301.00px;top:220.80px;width:75.80px;height:33.40px;"></div>
<div class="t" style="left:326.60px;top:231.00px;font-size:14.53px;color:#424242;transform:scaleX(0.8928);">Cue</div>
<div class="t" style="left:293.20px;top:263.00px;font-size:19.48px;color:#363636;transform:scaleX(0.9142);-webkit-text-stroke:0.4px;">3</div>
<div class="t" style="left:293.60px;top:284.00px;font-size:14.53px;color:#363636;transform:scaleX(0.8672);-webkit-text-stroke:0.35px;">Mic</div>
<div class="fp" style="position:absolute;left:329.90px;top:286.20px;width:47.30px;height:561.80px;"></div>
<div class="t" style="left:334.30px;top:350.00px;font-size:9.74px;color:#747474;transform:scaleX(0.7849);-webkit-text-stroke:0.35px;">10</div>
<div class="t" style="left:334.20px;top:397.00px;font-size:9.74px;color:#747474;transform:scaleX(0.8865);-webkit-text-stroke:0.35px;">5</div>
<div class="t" style="left:334.20px;top:490.00px;font-size:9.74px;color:#747474;transform:scaleX(0.8865);-webkit-text-stroke:0.35px;">5</div>
<div class="t" style="left:334.30px;top:534.00px;font-size:9.74px;color:#747474;transform:scaleX(0.7849);-webkit-text-stroke:0.35px;">10</div>
<div class="t" style="left:333.55px;top:613.00px;font-size:9.74px;color:#747474;transform:scaleX(0.8542);-webkit-text-stroke:0.35px;">20</div>
<div class="t" style="left:333.80px;top:742.00px;font-size:9.74px;color:#747474;transform:scaleX(0.8773);-webkit-text-stroke:0.35px;">40</div>
<svg class="abs" style="left:333.60px;top:810.5px" width="13" height="8" viewBox="0 0 13 8"><path d="M6,4 C4.7,1.9 3.5,1.5 2.6,1.5 C1.5,1.5 .7,2.6 .7,4 C.7,5.4 1.5,6.5 2.6,6.5 C3.5,6.5 4.7,6.1 6,4 C7.3,1.9 8.5,1.5 9.4,1.5 C10.5,1.5 11.3,2.6 11.3,4 C11.3,5.4 10.5,6.5 9.4,6.5 C8.5,6.5 7.3,6.1 6,4 Z" fill="none" stroke="#747474" stroke-width=".95" opacity=".85"/></svg>
<div style="position:absolute;left:316.80px;top:440.10px;width:59.80px;height:17.00px;background:rgba(100,100,100,.52);border-radius:2px 0 0 2px;"></div>
<div class="t" style="left:319.80px;top:444.00px;font-size:11.05px;color:#e6e6e6;transform:scaleX(0.8275);font-weight:bold;-webkit-text-stroke:0;">U</div>
<div style="position:absolute;left:329.80px;top:447.80px;width:23.00px;height:2.00px;background:#f4f4f4;"></div>
<div style="position:absolute;left:354.80px;top:447.90px;width:21.80px;height:1.80px;background:#505050;"></div>
<div class="trk" style="position:absolute;left:351.90px;top:312.50px;width:3.40px;height:507.00px;"></div>
<div style="position:absolute;left:293.00px;top:325.70px;width:32.20px;height:19.60px;background:linear-gradient(#ae0c0c,#a20404);border:1px solid #5a0000;box-sizing:border-box;border-radius:2px;box-shadow:1px 1px 1px rgba(0,0,0,.25);"></div>
<div class="t" style="left:297.40px;top:328.00px;font-size:14.53px;color:#ffb8b8;transform:scaleX(0.8895);-webkit-text-stroke:0;">48V</div>
<div style="position:absolute;left:291.60px;top:510.20px;width:13.10px;height:255.00px;background:linear-gradient(#292400 0,#2b2602 78.6px,#03240a 79.2px,#031f08 100%);border:1.6px solid #0b0b07;box-sizing:border-box;"></div>
<div style="position:absolute;left:289.80px;top:588.80px;width:16.50px;height:1.50px;background:#f0f0f0;"></div>
<div class="t" style="left:308.55px;top:583.00px;font-size:10.76px;color:#787878;transform:scaleX(0.8361);">0</div>
<svg class="abs" style="left:334.80px;top:560.55px;filter:drop-shadow(3px 3px 3.5px rgba(0,0,0,.5))" width="38" height="82" viewBox="0 0 38 82">  <g clip-path="url(#kclip)">
   <rect x="0" y="0" width="38" height="82" fill="#777"/>
   <rect x="0" y="0" width="38" height="13" fill="url(#kc)"/>
   <path d="M0,12.5 Q19,7.5 38,12.5 V41.5 H0 Z" fill="url(#kd)"/>
   <path d="M0,17 Q19,12.5 38,17" stroke="#7d8083" stroke-width=".8" fill="none" opacity=".8"/>
   <path d="M0,22 Q19,18 38,22" stroke="#85888a" stroke-width=".7" fill="none" opacity=".7"/>
   <path d="M0,27 Q19,24 38,27" stroke="#8e9092" stroke-width=".7" fill="none" opacity=".7"/>
   <path d="M0,32 Q19,30 38,32" stroke="#999" stroke-width=".7" fill="none" opacity=".7"/>
   <path d="M0,37 Q19,36 38,37" stroke="#a2a2a2" stroke-width=".7" fill="none" opacity=".7"/>
   <rect x="0" y="41.5" width="38" height="34" fill="url(#kl)"/>
   <path d="M0,47.2 Q19,49.4 38,47.2" stroke="#858585" stroke-width=".9" fill="none" opacity=".85"/>
   <path d="M0,54 Q19,57.2 38,54" stroke="#8c8c8c" stroke-width=".9" fill="none" opacity=".85"/>
   <path d="M0,60.4 Q19,64.6 38,60.4" stroke="#999" stroke-width=".9" fill="none" opacity=".85"/>
   <path d="M0,61.4 Q19,65.6 38,61.4" stroke="#f4f4f4" stroke-width=".9" fill="none" opacity=".8"/>
   <path d="M0,70.4 Q19,77.6 38,70.4 V82 H0 Z" fill="url(#kb)"/>
   <path d="M0,70.4 Q19,77.6 38,70.4" stroke="#5e5e5e" stroke-width="1.1" fill="none"/>
   <rect x="0" y="40.9" width="38" height="1.2" fill="#2c2c2c"/>
   <rect x="0" y="42.1" width="38" height=".9" fill="#c8c8c8" opacity=".8"/>
   <rect x="0" y="0" width="38" height="82" fill="url(#ksh)"/>
  </g>
  <path d="M3,.6 H35 Q37.4,.6 37.4,3 V79 Q37.4,81.4 35,81.4 H3 Q.6,81.4 .6,79 V64 C.6,57 5.4,53 5.4,46 V43.4 L4.2,41.5 L5.4,39.6 V38 C5.4,31 .6,27 .6,21 V3 Q.6,.6 3,.6 Z" fill="none" stroke="#2b2b2b" stroke-width="1.6"/></svg>
<div class="btn" style="position:absolute;left:301.00px;top:858.00px;width:75.80px;height:33.50px;"></div>
<div class="t" style="left:322.40px;top:868.00px;font-size:14.53px;color:#424242;transform:scaleX(1.0306);">Mute</div>
<div style="position:absolute;left:392.90px;top:119.00px;width:106.10px;height:58.20px;background:linear-gradient(#cdcdcd 0%,#c6c6c6 25%,#b2b2b2 60%,#9c9c9c 100%);box-shadow:inset 0 1px 0 #dcdcdc, inset 2px 0 0 rgba(255,255,255,.28);"></div>
<div style="position:absolute;left:498.90px;top:119.00px;width:1.50px;height:781.00px;background:#1c1c1c;"></div>
<div style="position:absolute;left:392.90px;top:179.00px;width:106.10px;height:721.00px;background:linear-gradient(90deg,#d2d2d2 0,#d0d0d0 1.7px,#b5b5b5 2.3px,#b3b3b3 40%,#b8b8b8 100%);"></div>
<div style="position:absolute;left:392.90px;top:179.00px;width:106.10px;height:4.50px;background:linear-gradient(rgba(0,0,0,.38),rgba(0,0,0,.08) 70%,rgba(0,0,0,0));"></div>
<div class="t" style="left:414.50px;top:138.00px;font-size:18.17px;color:#0c0c0c;transform:scaleX(0.9618);-webkit-text-stroke:0.5px;">Tom 10&quot;</div>
<div style="position:absolute;left:404.00px;top:191.40px;width:83.10px;height:8.20px;border-radius:3.5px;background:linear-gradient(#9a9a9a 0%,#c9c9c9 30%,#cdcdcd 100%);box-shadow:inset 0 1px 1.5px rgba(0,0,0,.45), 0 1px 0 rgba(255,255,255,.35);"></div>
<div style="position:absolute;left:435.20px;top:192.60px;width:8.60px;height:6.60px;background:linear-gradient(#12c812 0,#28f028 45%,#10c010 100%);border-radius:1px;"></div>
<div style="position:absolute;left:443.80px;top:192.30px;width:3.20px;height:7.00px;background:#0a0a0a;"></div>
<div class="t" style="left:404.10px;top:202.00px;font-size:10.17px;color:#9c9c9c;transform:scaleX(0.6541);-webkit-text-stroke:0px;">L</div>
<div class="t" style="left:442.20px;top:202.00px;font-size:10.17px;color:#9c9c9c;transform:scaleX(0.8168);-webkit-text-stroke:0px;">C</div>
<div class="t" style="left:481.20px;top:202.00px;font-size:10.17px;color:#9c9c9c;transform:scaleX(0.7079);-webkit-text-stroke:0px;">R</div>
<div class="btn" style="position:absolute;left:408.40px;top:220.80px;width:75.80px;height:33.40px;"></div>
<div class="t" style="left:434.00px;top:231.00px;font-size:14.53px;color:#424242;transform:scaleX(0.8928);">Cue</div>
<div class="t" style="left:400.50px;top:263.00px;font-size:19.48px;color:#363636;transform:scaleX(0.9327);-webkit-text-stroke:0.4px;">4</div>
<div class="t" style="left:401.00px;top:284.00px;font-size:14.53px;color:#363636;transform:scaleX(0.8672);-webkit-text-stroke:0.35px;">Mic</div>
<div class="fp" style="position:absolute;left:437.30px;top:286.20px;width:47.30px;height:561.80px;"></div>
<div class="t" style="left:441.70px;top:350.00px;font-size:9.74px;color:#747474;transform:scaleX(0.7849);-webkit-text-stroke:0.35px;">10</div>
<div class="t" style="left:441.60px;top:397.00px;font-size:9.74px;color:#747474;transform:scaleX(0.8865);-webkit-text-stroke:0.35px;">5</div>
<div class="t" style="left:441.60px;top:490.00px;font-size:9.74px;color:#747474;transform:scaleX(0.8865);-webkit-text-stroke:0.35px;">5</div>
<div class="t" style="left:441.70px;top:534.00px;font-size:9.74px;color:#747474;transform:scaleX(0.7849);-webkit-text-stroke:0.35px;">10</div>
<div class="t" style="left:440.95px;top:613.00px;font-size:9.74px;color:#747474;transform:scaleX(0.8542);-webkit-text-stroke:0.35px;">20</div>
<div class="t" style="left:441.20px;top:742.00px;font-size:9.74px;color:#747474;transform:scaleX(0.8773);-webkit-text-stroke:0.35px;">40</div>
<svg class="abs" style="left:441.00px;top:810.5px" width="13" height="8" viewBox="0 0 13 8"><path d="M6,4 C4.7,1.9 3.5,1.5 2.6,1.5 C1.5,1.5 .7,2.6 .7,4 C.7,5.4 1.5,6.5 2.6,6.5 C3.5,6.5 4.7,6.1 6,4 C7.3,1.9 8.5,1.5 9.4,1.5 C10.5,1.5 11.3,2.6 11.3,4 C11.3,5.4 10.5,6.5 9.4,6.5 C8.5,6.5 7.3,6.1 6,4 Z" fill="none" stroke="#747474" stroke-width=".95" opacity=".85"/></svg>
<div style="position:absolute;left:424.20px;top:440.10px;width:59.80px;height:17.00px;background:rgba(100,100,100,.52);border-radius:2px 0 0 2px;"></div>
<div class="t" style="left:427.20px;top:444.00px;font-size:11.05px;color:#e6e6e6;transform:scaleX(0.8275);font-weight:bold;-webkit-text-stroke:0;">U</div>
<div style="position:absolute;left:437.20px;top:447.80px;width:23.00px;height:2.00px;background:#f4f4f4;"></div>
<div style="position:absolute;left:462.20px;top:447.90px;width:21.80px;height:1.80px;background:#505050;"></div>
<div class="trk" style="position:absolute;left:459.30px;top:312.50px;width:3.40px;height:507.00px;"></div>
<div style="position:absolute;left:401.50px;top:370.00px;width:18.70px;height:17.20px;background:#484848;border:1.3px solid #1e1e1e;border-bottom-width:1.8px;box-sizing:border-box;border-radius:2.5px;"></div>
<div class="t" style="left:406.10px;top:371.00px;font-size:14.83px;color:#0cf80c;transform:scaleX(0.8150);font-weight:bold;-webkit-text-stroke:0;">G</div>
<div style="position:absolute;left:399.00px;top:510.20px;width:13.10px;height:255.00px;background:linear-gradient(#292400 0,#2b2602 78.6px,#03240a 79.2px,#031f08 100%);border:1.6px solid #0b0b07;box-sizing:border-box;"></div>
<div style="position:absolute;left:397.20px;top:588.80px;width:16.50px;height:1.50px;background:#f0f0f0;"></div>
<div class="t" style="left:415.95px;top:583.00px;font-size:10.76px;color:#787878;transform:scaleX(0.8361);">0</div>
<svg class="abs" style="left:442.20px;top:529.05px;filter:drop-shadow(3px 3px 3.5px rgba(0,0,0,.5))" width="38" height="82" viewBox="0 0 38 82">  <g clip-path="url(#kclip)">
   <rect x="0" y="0" width="38" height="82" fill="#777"/>
   <rect x="0" y="0" width="38" height="13" fill="url(#kc)"/>
   <path d="M0,12.5 Q19,7.5 38,12.5 V41.5 H0 Z" fill="url(#kd)"/>
   <path d="M0,17 Q19,12.5 38,17" stroke="#7d8083" stroke-width=".8" fill="none" opacity=".8"/>
   <path d="M0,22 Q19,18 38,22" stroke="#85888a" stroke-width=".7" fill="none" opacity=".7"/>
   <path d="M0,27 Q19,24 38,27" stroke="#8e9092" stroke-width=".7" fill="none" opacity=".7"/>
   <path d="M0,32 Q19,30 38,32" stroke="#999" stroke-width=".7" fill="none" opacity=".7"/>
   <path d="M0,37 Q19,36 38,37" stroke="#a2a2a2" stroke-width=".7" fill="none" opacity=".7"/>
   <rect x="0" y="41.5" width="38" height="34" fill="url(#kl)"/>
   <path d="M0,47.2 Q19,49.4 38,47.2" stroke="#858585" stroke-width=".9" fill="none" opacity=".85"/>
   <path d="M0,54 Q19,57.2 38,54" stroke="#8c8c8c" stroke-width=".9" fill="none" opacity=".85"/>
   <path d="M0,60.4 Q19,64.6 38,60.4" stroke="#999" stroke-width=".9" fill="none" opacity=".85"/>
   <path d="M0,61.4 Q19,65.6 38,61.4" stroke="#f4f4f4" stroke-width=".9" fill="none" opacity=".8"/>
   <path d="M0,70.4 Q19,77.6 38,70.4 V82 H0 Z" fill="url(#kb)"/>
   <path d="M0,70.4 Q19,77.6 38,70.4" stroke="#5e5e5e" stroke-width="1.1" fill="none"/>
   <rect x="0" y="40.9" width="38" height="1.2" fill="#2c2c2c"/>
   <rect x="0" y="42.1" width="38" height=".9" fill="#c8c8c8" opacity=".8"/>
   <rect x="0" y="0" width="38" height="82" fill="url(#ksh)"/>
  </g>
  <path d="M3,.6 H35 Q37.4,.6 37.4,3 V79 Q37.4,81.4 35,81.4 H3 Q.6,81.4 .6,79 V64 C.6,57 5.4,53 5.4,46 V43.4 L4.2,41.5 L5.4,39.6 V38 C5.4,31 .6,27 .6,21 V3 Q.6,.6 3,.6 Z" fill="none" stroke="#2b2b2b" stroke-width="1.6"/></svg>
<div class="btn" style="position:absolute;left:408.40px;top:858.00px;width:75.80px;height:33.50px;"></div>
<div class="t" style="left:429.80px;top:868.00px;font-size:14.53px;color:#424242;transform:scaleX(1.0306);">Mute</div>
<div style="position:absolute;left:500.30px;top:119.00px;width:106.10px;height:58.20px;background:linear-gradient(#cdcdcd 0%,#c6c6c6 25%,#b2b2b2 60%,#9c9c9c 100%);box-shadow:inset 0 1px 0 #dcdcdc, inset 2px 0 0 rgba(255,255,255,.28);"></div>
<div style="position:absolute;left:606.30px;top:119.00px;width:1.50px;height:781.00px;background:#1c1c1c;"></div>
<div style="position:absolute;left:500.30px;top:179.00px;width:106.10px;height:721.00px;background:linear-gradient(90deg,#d2d2d2 0,#d0d0d0 1.7px,#b5b5b5 2.3px,#b3b3b3 40%,#b8b8b8 100%);"></div>
<div style="position:absolute;left:500.30px;top:179.00px;width:106.10px;height:4.50px;background:linear-gradient(rgba(0,0,0,.38),rgba(0,0,0,.08) 70%,rgba(0,0,0,0));"></div>
<div class="t" style="left:524.00px;top:138.00px;font-size:18.17px;color:#0c0c0c;transform:scaleX(0.9676);-webkit-text-stroke:0.5px;">Tom12&quot;</div>
<div style="position:absolute;left:511.40px;top:191.40px;width:83.10px;height:8.20px;border-radius:3.5px;background:linear-gradient(#9a9a9a 0%,#c9c9c9 30%,#cdcdcd 100%);box-shadow:inset 0 1px 1.5px rgba(0,0,0,.45), 0 1px 0 rgba(255,255,255,.35);"></div>
<div style="position:absolute;left:554.30px;top:192.60px;width:13.30px;height:6.60px;background:linear-gradient(#12c812 0,#28f028 45%,#10c010 100%);border-radius:1px;"></div>
<div style="position:absolute;left:551.20px;top:192.30px;width:3.10px;height:7.00px;background:#0a0a0a;"></div>
<div class="t" style="left:511.50px;top:202.00px;font-size:10.17px;color:#9c9c9c;transform:scaleX(0.6541);-webkit-text-stroke:0px;">L</div>
<div class="t" style="left:549.60px;top:202.00px;font-size:10.17px;color:#9c9c9c;transform:scaleX(0.8168);-webkit-text-stroke:0px;">C</div>
<div class="t" style="left:588.60px;top:202.00px;font-size:10.17px;color:#9c9c9c;transform:scaleX(0.7079);-webkit-text-stroke:0px;">R</div>
<div class="btn" style="position:absolute;left:515.80px;top:220.80px;width:75.80px;height:33.40px;"></div>
<div class="t" style="left:541.40px;top:231.00px;font-size:14.53px;color:#424242;transform:scaleX(0.8928);">Cue</div>
<div class="t" style="left:508.00px;top:263.00px;font-size:19.48px;color:#363636;transform:scaleX(0.8865);-webkit-text-stroke:0.4px;">5</div>
<div class="t" style="left:508.40px;top:284.00px;font-size:14.53px;color:#363636;transform:scaleX(0.8672);-webkit-text-stroke:0.35px;">Mic</div>
<div class="fp" style="position:absolute;left:544.70px;top:286.20px;width:47.30px;height:561.80px;"></div>
<div class="t" style="left:549.10px;top:350.00px;font-size:9.74px;color:#747474;transform:scaleX(0.7849);-webkit-text-stroke:0.35px;">10</div>
<div class="t" style="left:549.00px;top:397.00px;font-size:9.74px;color:#747474;transform:scaleX(0.8865);-webkit-text-stroke:0.35px;">5</div>
<div class="t" style="left:549.00px;top:490.00px;font-size:9.74px;color:#747474;transform:scaleX(0.8865);-webkit-text-stroke:0.35px;">5</div>
<div class="t" style="left:549.10px;top:534.00px;font-size:9.74px;color:#747474;transform:scaleX(0.7849);-webkit-text-stroke:0.35px;">10</div>
<div class="t" style="left:548.35px;top:613.00px;font-size:9.74px;color:#747474;transform:scaleX(0.8542);-webkit-text-stroke:0.35px;">20</div>
<div class="t" style="left:548.60px;top:742.00px;font-size:9.74px;color:#747474;transform:scaleX(0.8773);-webkit-text-stroke:0.35px;">40</div>
<svg class="abs" style="left:548.40px;top:810.5px" width="13" height="8" viewBox="0 0 13 8"><path d="M6,4 C4.7,1.9 3.5,1.5 2.6,1.5 C1.5,1.5 .7,2.6 .7,4 C.7,5.4 1.5,6.5 2.6,6.5 C3.5,6.5 4.7,6.1 6,4 C7.3,1.9 8.5,1.5 9.4,1.5 C10.5,1.5 11.3,2.6 11.3,4 C11.3,5.4 10.5,6.5 9.4,6.5 C8.5,6.5 7.3,6.1 6,4 Z" fill="none" stroke="#747474" stroke-width=".95" opacity=".85"/></svg>
<div style="position:absolute;left:531.60px;top:440.10px;width:59.80px;height:17.00px;background:rgba(100,100,100,.52);border-radius:2px 0 0 2px;"></div>
<div class="t" style="left:534.60px;top:444.00px;font-size:11.05px;color:#e6e6e6;transform:scaleX(0.8275);font-weight:bold;-webkit-text-stroke:0;">U</div>
<div style="position:absolute;left:544.60px;top:447.80px;width:23.00px;height:2.00px;background:#f4f4f4;"></div>
<div style="position:absolute;left:569.60px;top:447.90px;width:21.80px;height:1.80px;background:#505050;"></div>
<div class="trk" style="position:absolute;left:566.70px;top:312.50px;width:3.40px;height:507.00px;"></div>
<div style="position:absolute;left:508.90px;top:370.00px;width:18.70px;height:17.20px;background:#484848;border:1.3px solid #1e1e1e;border-bottom-width:1.8px;box-sizing:border-box;border-radius:2.5px;"></div>
<div class="t" style="left:513.50px;top:371.00px;font-size:14.83px;color:#0cf80c;transform:scaleX(0.8150);font-weight:bold;-webkit-text-stroke:0;">G</div>
<div style="position:absolute;left:506.40px;top:510.20px;width:13.10px;height:255.00px;background:linear-gradient(#292400 0,#2b2602 78.6px,#03240a 79.2px,#031f08 100%);border:1.6px solid #0b0b07;box-sizing:border-box;"></div>
<div style="position:absolute;left:504.60px;top:588.80px;width:16.50px;height:1.50px;background:#f0f0f0;"></div>
<div class="t" style="left:523.35px;top:583.00px;font-size:10.76px;color:#787878;transform:scaleX(0.8361);">0</div>
<svg class="abs" style="left:549.60px;top:529.05px;filter:drop-shadow(3px 3px 3.5px rgba(0,0,0,.5))" width="38" height="82" viewBox="0 0 38 82">  <g clip-path="url(#kclip)">
   <rect x="0" y="0" width="38" height="82" fill="#777"/>
   <rect x="0" y="0" width="38" height="13" fill="url(#kc)"/>
   <path d="M0,12.5 Q19,7.5 38,12.5 V41.5 H0 Z" fill="url(#kd)"/>
   <path d="M0,17 Q19,12.5 38,17" stroke="#7d8083" stroke-width=".8" fill="none" opacity=".8"/>
   <path d="M0,22 Q19,18 38,22" stroke="#85888a" stroke-width=".7" fill="none" opacity=".7"/>
   <path d="M0,27 Q19,24 38,27" stroke="#8e9092" stroke-width=".7" fill="none" opacity=".7"/>
   <path d="M0,32 Q19,30 38,32" stroke="#999" stroke-width=".7" fill="none" opacity=".7"/>
   <path d="M0,37 Q19,36 38,37" stroke="#a2a2a2" stroke-width=".7" fill="none" opacity=".7"/>
   <rect x="0" y="41.5" width="38" height="34" fill="url(#kl)"/>
   <path d="M0,47.2 Q19,49.4 38,47.2" stroke="#858585" stroke-width=".9" fill="none" opacity=".85"/>
   <path d="M0,54 Q19,57.2 38,54" stroke="#8c8c8c" stroke-width=".9" fill="none" opacity=".85"/>
   <path d="M0,60.4 Q19,64.6 38,60.4" stroke="#999" stroke-width=".9" fill="none" opacity=".85"/>
   <path d="M0,61.4 Q19,65.6 38,61.4" stroke="#f4f4f4" stroke-width=".9" fill="none" opacity=".8"/>
   <path d="M0,70.4 Q19,77.6 38,70.4 V82 H0 Z" fill="url(#kb)"/>
   <path d="M0,70.4 Q19,77.6 38,70.4" stroke="#5e5e5e" stroke-width="1.1" fill="none"/>
   <rect x="0" y="40.9" width="38" height="1.2" fill="#2c2c2c"/>
   <rect x="0" y="42.1" width="38" height=".9" fill="#c8c8c8" opacity=".8"/>
   <rect x="0" y="0" width="38" height="82" fill="url(#ksh)"/>
  </g>
  <path d="M3,.6 H35 Q37.4,.6 37.4,3 V79 Q37.4,81.4 35,81.4 H3 Q.6,81.4 .6,79 V64 C.6,57 5.4,53 5.4,46 V43.4 L4.2,41.5 L5.4,39.6 V38 C5.4,31 .6,27 .6,21 V3 Q.6,.6 3,.6 Z" fill="none" stroke="#2b2b2b" stroke-width="1.6"/></svg>
<div class="btn" style="position:absolute;left:515.80px;top:858.00px;width:75.80px;height:33.50px;"></div>
<div class="t" style="left:537.20px;top:868.00px;font-size:14.53px;color:#424242;transform:scaleX(1.0306);">Mute</div>
<div style="position:absolute;left:607.70px;top:119.00px;width:106.10px;height:58.20px;background:linear-gradient(#cdcdcd 0%,#c6c6c6 25%,#b2b2b2 60%,#9c9c9c 100%);box-shadow:inset 0 1px 0 #dcdcdc, inset 2px 0 0 rgba(255,255,255,.28);"></div>
<div style="position:absolute;left:713.70px;top:119.00px;width:1.50px;height:781.00px;background:#1c1c1c;"></div>
<div style="position:absolute;left:607.70px;top:179.00px;width:106.10px;height:721.00px;background:linear-gradient(90deg,#d2d2d2 0,#d0d0d0 1.7px,#b5b5b5 2.3px,#b3b3b3 40%,#b8b8b8 100%);"></div>
<div style="position:absolute;left:607.70px;top:179.00px;width:106.10px;height:4.50px;background:linear-gradient(rgba(0,0,0,.38),rgba(0,0,0,.08) 70%,rgba(0,0,0,0));"></div>
<div class="t" style="left:629.00px;top:138.00px;font-size:18.17px;color:#0c0c0c;transform:scaleX(0.9618);-webkit-text-stroke:0.5px;">Tom 16&quot;</div>
<div style="position:absolute;left:618.80px;top:191.40px;width:83.10px;height:8.20px;border-radius:3.5px;background:linear-gradient(#9a9a9a 0%,#c9c9c9 30%,#cdcdcd 100%);box-shadow:inset 0 1px 1.5px rgba(0,0,0,.45), 0 1px 0 rgba(255,255,255,.35);"></div>
<div style="position:absolute;left:661.30px;top:192.60px;width:13.70px;height:6.60px;background:linear-gradient(#12c812 0,#28f028 45%,#10c010 100%);border-radius:1px;"></div>
<div style="position:absolute;left:658.20px;top:192.30px;width:3.10px;height:7.00px;background:#0a0a0a;"></div>
<div class="t" style="left:618.90px;top:202.00px;font-size:10.17px;color:#9c9c9c;transform:scaleX(0.6541);-webkit-text-stroke:0px;">L</div>
<div class="t" style="left:657.00px;top:202.00px;font-size:10.17px;color:#9c9c9c;transform:scaleX(0.8168);-webkit-text-stroke:0px;">C</div>
<div class="t" style="left:696.00px;top:202.00px;font-size:10.17px;color:#9c9c9c;transform:scaleX(0.7079);-webkit-text-stroke:0px;">R</div>
<div class="btn" style="position:absolute;left:623.20px;top:220.80px;width:75.80px;height:33.40px;"></div>
<div class="t" style="left:648.80px;top:231.00px;font-size:14.53px;color:#424242;transform:scaleX(0.8928);">Cue</div>
<div class="t" style="left:615.70px;top:263.00px;font-size:19.48px;color:#363636;transform:scaleX(0.8680);-webkit-text-stroke:0.4px;">6</div>
<div class="t" style="left:615.80px;top:284.00px;font-size:14.53px;color:#363636;transform:scaleX(0.8672);-webkit-text-stroke:0.35px;">Mic</div>
<div class="fp" style="position:absolute;left:652.10px;top:286.20px;width:47.30px;height:561.80px;"></div>
<div class="t" style="left:656.50px;top:350.00px;font-size:9.74px;color:#747474;transform:scaleX(0.7849);-webkit-text-stroke:0.35px;">10</div>
<div class="t" style="left:656.40px;top:397.00px;font-size:9.74px;color:#747474;transform:scaleX(0.8865);-webkit-text-stroke:0.35px;">5</div>
<div class="t" style="left:656.40px;top:490.00px;font-size:9.74px;color:#747474;transform:scaleX(0.8865);-webkit-text-stroke:0.35px;">5</div>
<div class="t" style="left:656.50px;top:534.00px;font-size:9.74px;color:#747474;transform:scaleX(0.7849);-webkit-text-stroke:0.35px;">10</div>
<div class="t" style="left:655.75px;top:613.00px;font-size:9.74px;color:#747474;transform:scaleX(0.8542);-webkit-text-stroke:0.35px;">20</div>
<div class="t" style="left:656.00px;top:742.00px;font-size:9.74px;color:#747474;transform:scaleX(0.8773);-webkit-text-stroke:0.35px;">40</div>
<svg class="abs" style="left:655.80px;top:810.5px" width="13" height="8" viewBox="0 0 13 8"><path d="M6,4 C4.7,1.9 3.5,1.5 2.6,1.5 C1.5,1.5 .7,2.6 .7,4 C.7,5.4 1.5,6.5 2.6,6.5 C3.5,6.5 4.7,6.1 6,4 C7.3,1.9 8.5,1.5 9.4,1.5 C10.5,1.5 11.3,2.6 11.3,4 C11.3,5.4 10.5,6.5 9.4,6.5 C8.5,6.5 7.3,6.1 6,4 Z" fill="none" stroke="#747474" stroke-width=".95" opacity=".85"/></svg>
<div style="position:absolute;left:639.00px;top:440.10px;width:59.80px;height:17.00px;background:rgba(100,100,100,.52);border-radius:2px 0 0 2px;"></div>
<div class="t" style="left:642.00px;top:444.00px;font-size:11.05px;color:#e6e6e6;transform:scaleX(0.8275);font-weight:bold;-webkit-text-stroke:0;">U</div>
<div style="position:absolute;left:652.00px;top:447.80px;width:23.00px;height:2.00px;background:#f4f4f4;"></div>
<div style="position:absolute;left:677.00px;top:447.90px;width:21.80px;height:1.80px;background:#505050;"></div>
<div class="trk" style="position:absolute;left:674.10px;top:312.50px;width:3.40px;height:507.00px;"></div>
<div style="position:absolute;left:616.30px;top:370.00px;width:18.70px;height:17.20px;background:#484848;border:1.3px solid #1e1e1e;border-bottom-width:1.8px;box-sizing:border-box;border-radius:2.5px;"></div>
<div class="t" style="left:620.90px;top:371.00px;font-size:14.83px;color:#0cf80c;transform:scaleX(0.8150);font-weight:bold;-webkit-text-stroke:0;">G</div>
<div style="position:absolute;left:613.80px;top:510.20px;width:13.10px;height:255.00px;background:linear-gradient(#292400 0,#2b2602 78.6px,#03240a 79.2px,#031f08 100%);border:1.6px solid #0b0b07;box-sizing:border-box;"></div>
<div style="position:absolute;left:612.00px;top:588.80px;width:16.50px;height:1.50px;background:#f0f0f0;"></div>
<div class="t" style="left:630.75px;top:583.00px;font-size:10.76px;color:#787878;transform:scaleX(0.8361);">0</div>
<svg class="abs" style="left:657.00px;top:666.05px;filter:drop-shadow(3px 3px 3.5px rgba(0,0,0,.5))" width="38" height="82" viewBox="0 0 38 82">  <g clip-path="url(#kclip)">
   <rect x="0" y="0" width="38" height="82" fill="#777"/>
   <rect x="0" y="0" width="38" height="13" fill="url(#kc)"/>
   <path d="M0,12.5 Q19,7.5 38,12.5 V41.5 H0 Z" fill="url(#kd)"/>
   <path d="M0,17 Q19,12.5 38,17" stroke="#7d8083" stroke-width=".8" fill="none" opacity=".8"/>
   <path d="M0,22 Q19,18 38,22" stroke="#85888a" stroke-width=".7" fill="none" opacity=".7"/>
   <path d="M0,27 Q19,24 38,27" stroke="#8e9092" stroke-width=".7" fill="none" opacity=".7"/>
   <path d="M0,32 Q19,30 38,32" stroke="#999" stroke-width=".7" fill="none" opacity=".7"/>
   <path d="M0,37 Q19,36 38,37" stroke="#a2a2a2" stroke-width=".7" fill="none" opacity=".7"/>
   <rect x="0" y="41.5" width="38" height="34" fill="url(#kl)"/>
   <path d="M0,47.2 Q19,49.4 38,47.2" stroke="#858585" stroke-width=".9" fill="none" opacity=".85"/>
   <path d="M0,54 Q19,57.2 38,54" stroke="#8c8c8c" stroke-width=".9" fill="none" opacity=".85"/>
   <path d="M0,60.4 Q19,64.6 38,60.4" stroke="#999" stroke-width=".9" fill="none" opacity=".85"/>
   <path d="M0,61.4 Q19,65.6 38,61.4" stroke="#f4f4f4" stroke-width=".9" fill="none" opacity=".8"/>
   <path d="M0,70.4 Q19,77.6 38,70.4 V82 H0 Z" fill="url(#kb)"/>
   <path d="M0,70.4 Q19,77.6 38,70.4" stroke="#5e5e5e" stroke-width="1.1" fill="none"/>
   <rect x="0" y="40.9" width="38" height="1.2" fill="#2c2c2c"/>
   <rect x="0" y="42.1" width="38" height=".9" fill="#c8c8c8" opacity=".8"/>
   <rect x="0" y="0" width="38" height="82" fill="url(#ksh)"/>
  </g>
  <path d="M3,.6 H35 Q37.4,.6 37.4,3 V79 Q37.4,81.4 35,81.4 H3 Q.6,81.4 .6,79 V64 C.6,57 5.4,53 5.4,46 V43.4 L4.2,41.5 L5.4,39.6 V38 C5.4,31 .6,27 .6,21 V3 Q.6,.6 3,.6 Z" fill="none" stroke="#2b2b2b" stroke-width="1.6"/></svg>
<div class="btn" style="position:absolute;left:623.20px;top:858.00px;width:75.80px;height:33.50px;"></div>
<div class="t" style="left:644.60px;top:868.00px;font-size:14.53px;color:#424242;transform:scaleX(1.0306);">Mute</div>
<div style="position:absolute;left:715.10px;top:119.00px;width:106.10px;height:58.20px;background:linear-gradient(#cdcdcd 0%,#c6c6c6 25%,#b2b2b2 60%,#9c9c9c 100%);box-shadow:inset 0 1px 0 #dcdcdc, inset 2px 0 0 rgba(255,255,255,.28);"></div>
<div style="position:absolute;left:821.10px;top:119.00px;width:1.50px;height:781.00px;background:#1c1c1c;"></div>
<div style="position:absolute;left:715.10px;top:179.00px;width:106.10px;height:721.00px;background:linear-gradient(90deg,#d2d2d2 0,#d0d0d0 1.7px,#b5b5b5 2.3px,#b3b3b3 40%,#b8b8b8 100%);"></div>
<div style="position:absolute;left:715.10px;top:179.00px;width:106.10px;height:4.50px;background:linear-gradient(rgba(0,0,0,.38),rgba(0,0,0,.08) 70%,rgba(0,0,0,0));"></div>
<div class="t" style="left:756.25px;top:138.00px;font-size:18.17px;color:#0c0c0c;transform:scaleX(0.8715);-webkit-text-stroke:0.5px;">OH</div>
<div style="position:absolute;left:726.20px;top:191.40px;width:83.10px;height:8.20px;border-radius:3.5px;background:linear-gradient(#9a9a9a 0%,#c9c9c9 30%,#cdcdcd 100%);box-shadow:inset 0 1px 1.5px rgba(0,0,0,.45), 0 1px 0 rgba(255,255,255,.35);"></div>
<div style="position:absolute;left:745.00px;top:192.60px;width:20.50px;height:6.60px;background:linear-gradient(#12c812 0,#28f028 45%,#10c010 100%);border-radius:1px;"></div>
<div style="position:absolute;left:765.50px;top:192.30px;width:3.30px;height:7.00px;background:#0a0a0a;"></div>
<div class="t" style="left:726.30px;top:202.00px;font-size:10.17px;color:#9c9c9c;transform:scaleX(0.6541);-webkit-text-stroke:0px;">L</div>
<div class="t" style="left:764.40px;top:202.00px;font-size:10.17px;color:#9c9c9c;transform:scaleX(0.8168);-webkit-text-stroke:0px;">C</div>
<div class="t" style="left:803.40px;top:202.00px;font-size:10.17px;color:#9c9c9c;transform:scaleX(0.7079);-webkit-text-stroke:0px;">R</div>
<div class="btn" style="position:absolute;left:730.60px;top:220.80px;width:75.80px;height:33.40px;"></div>
<div class="t" style="left:756.20px;top:231.00px;font-size:14.53px;color:#424242;transform:scaleX(0.8928);">Cue</div>
<div class="t" style="left:723.00px;top:263.00px;font-size:19.48px;color:#363636;transform:scaleX(0.8865);-webkit-text-stroke:0.4px;">7</div>
<div class="t" style="left:723.20px;top:284.00px;font-size:14.53px;color:#363636;transform:scaleX(0.8672);-webkit-text-stroke:0.35px;">Mic</div>
<div class="fp" style="position:absolute;left:759.50px;top:286.20px;width:47.30px;height:561.80px;"></div>
<div class="t" style="left:763.90px;top:350.00px;font-size:9.74px;color:#747474;transform:scaleX(0.7849);-webkit-text-stroke:0.35px;">10</div>
<div class="t" style="left:763.80px;top:397.00px;font-size:9.74px;color:#747474;transform:scaleX(0.8865);-webkit-text-stroke:0.35px;">5</div>
<div class="t" style="left:763.80px;top:490.00px;font-size:9.74px;color:#747474;transform:scaleX(0.8865);-webkit-text-stroke:0.35px;">5</div>
<div class="t" style="left:763.90px;top:534.00px;font-size:9.74px;color:#747474;transform:scaleX(0.7849);-webkit-text-stroke:0.35px;">10</div>
<div class="t" style="left:763.15px;top:613.00px;font-size:9.74px;color:#747474;transform:scaleX(0.8542);-webkit-text-stroke:0.35px;">20</div>
<div class="t" style="left:763.40px;top:742.00px;font-size:9.74px;color:#747474;transform:scaleX(0.8773);-webkit-text-stroke:0.35px;">40</div>
<svg class="abs" style="left:763.20px;top:810.5px" width="13" height="8" viewBox="0 0 13 8"><path d="M6,4 C4.7,1.9 3.5,1.5 2.6,1.5 C1.5,1.5 .7,2.6 .7,4 C.7,5.4 1.5,6.5 2.6,6.5 C3.5,6.5 4.7,6.1 6,4 C7.3,1.9 8.5,1.5 9.4,1.5 C10.5,1.5 11.3,2.6 11.3,4 C11.3,5.4 10.5,6.5 9.4,6.5 C8.5,6.5 7.3,6.1 6,4 Z" fill="none" stroke="#747474" stroke-width=".95" opacity=".85"/></svg>
<div style="position:absolute;left:746.40px;top:440.10px;width:59.80px;height:17.00px;background:rgba(100,100,100,.52);border-radius:2px 0 0 2px;"></div>
<div class="t" style="left:749.40px;top:444.00px;font-size:11.05px;color:#e6e6e6;transform:scaleX(0.8275);font-weight:bold;-webkit-text-stroke:0;">U</div>
<div style="position:absolute;left:759.40px;top:447.80px;width:23.00px;height:2.00px;background:#f4f4f4;"></div>
<div style="position:absolute;left:784.40px;top:447.90px;width:21.80px;height:1.80px;background:#505050;"></div>
<div class="trk" style="position:absolute;left:781.50px;top:312.50px;width:3.40px;height:507.00px;"></div>
<div style="position:absolute;left:722.60px;top:325.70px;width:32.20px;height:19.60px;background:linear-gradient(#ae0c0c,#a20404);border:1px solid #5a0000;box-sizing:border-box;border-radius:2px;box-shadow:1px 1px 1px rgba(0,0,0,.25);"></div>
<div class="t" style="left:727.00px;top:328.00px;font-size:14.53px;color:#ffb8b8;transform:scaleX(0.8895);-webkit-text-stroke:0;">48V</div>
<div style="position:absolute;left:721.20px;top:510.20px;width:13.10px;height:255.00px;background:linear-gradient(#292400 0,#2b2602 78.6px,#03240a 79.2px,#031f08 100%);border:1.6px solid #0b0b07;box-sizing:border-box;"></div>
<div style="position:absolute;left:719.40px;top:588.80px;width:16.50px;height:1.50px;background:#f0f0f0;"></div>
<div class="t" style="left:738.15px;top:583.00px;font-size:10.76px;color:#787878;transform:scaleX(0.8361);">0</div>
<svg class="abs" style="left:764.40px;top:671.80px;filter:drop-shadow(3px 3px 3.5px rgba(0,0,0,.5))" width="38" height="82" viewBox="0 0 38 82">  <g clip-path="url(#kclip)">
   <rect x="0" y="0" width="38" height="82" fill="#777"/>
   <rect x="0" y="0" width="38" height="13" fill="url(#kc)"/>
   <path d="M0,12.5 Q19,7.5 38,12.5 V41.5 H0 Z" fill="url(#kd)"/>
   <path d="M0,17 Q19,12.5 38,17" stroke="#7d8083" stroke-width=".8" fill="none" opacity=".8"/>
   <path d="M0,22 Q19,18 38,22" stroke="#85888a" stroke-width=".7" fill="none" opacity=".7"/>
   <path d="M0,27 Q19,24 38,27" stroke="#8e9092" stroke-width=".7" fill="none" opacity=".7"/>
   <path d="M0,32 Q19,30 38,32" stroke="#999" stroke-width=".7" fill="none" opacity=".7"/>
   <path d="M0,37 Q19,36 38,37" stroke="#a2a2a2" stroke-width=".7" fill="none" opacity=".7"/>
   <rect x="0" y="41.5" width="38" height="34" fill="url(#kl)"/>
   <path d="M0,47.2 Q19,49.4 38,47.2" stroke="#858585" stroke-width=".9" fill="none" opacity=".85"/>
   <path d="M0,54 Q19,57.2 38,54" stroke="#8c8c8c" stroke-width=".9" fill="none" opacity=".85"/>
   <path d="M0,60.4 Q19,64.6 38,60.4" stroke="#999" stroke-width=".9" fill="none" opacity=".85"/>
   <path d="M0,61.4 Q19,65.6 38,61.4" stroke="#f4f4f4" stroke-width=".9" fill="none" opacity=".8"/>
   <path d="M0,70.4 Q19,77.6 38,70.4 V82 H0 Z" fill="url(#kb)"/>
   <path d="M0,70.4 Q19,77.6 38,70.4" stroke="#5e5e5e" stroke-width="1.1" fill="none"/>
   <rect x="0" y="40.9" width="38" height="1.2" fill="#2c2c2c"/>
   <rect x="0" y="42.1" width="38" height=".9" fill="#c8c8c8" opacity=".8"/>
   <rect x="0" y="0" width="38" height="82" fill="url(#ksh)"/>
  </g>
  <path d="M3,.6 H35 Q37.4,.6 37.4,3 V79 Q37.4,81.4 35,81.4 H3 Q.6,81.4 .6,79 V64 C.6,57 5.4,53 5.4,46 V43.4 L4.2,41.5 L5.4,39.6 V38 C5.4,31 .6,27 .6,21 V3 Q.6,.6 3,.6 Z" fill="none" stroke="#2b2b2b" stroke-width="1.6"/></svg>
<div class="btn" style="position:absolute;left:730.60px;top:858.00px;width:75.80px;height:33.50px;"></div>
<div class="t" style="left:752.00px;top:868.00px;font-size:14.53px;color:#424242;transform:scaleX(1.0306);">Mute</div>
<div style="position:absolute;left:822.50px;top:119.00px;width:106.10px;height:58.20px;background:linear-gradient(#cdcdcd 0%,#c6c6c6 25%,#b2b2b2 60%,#9c9c9c 100%);box-shadow:inset 0 1px 0 #dcdcdc, inset 2px 0 0 rgba(255,255,255,.28);"></div>
<div style="position:absolute;left:928.50px;top:119.00px;width:1.50px;height:781.00px;background:#1c1c1c;"></div>
<div style="position:absolute;left:822.50px;top:179.00px;width:106.10px;height:721.00px;background:linear-gradient(90deg,#d2d2d2 0,#d0d0d0 1.7px,#b5b5b5 2.3px,#b3b3b3 40%,#b8b8b8 100%);"></div>
<div style="position:absolute;left:822.50px;top:179.00px;width:106.10px;height:4.50px;background:linear-gradient(rgba(0,0,0,.38),rgba(0,0,0,.08) 70%,rgba(0,0,0,0));"></div>
<div class="t" style="left:863.75px;top:138.00px;font-size:18.17px;color:#0c0c0c;transform:scaleX(0.8531);-webkit-text-stroke:0.5px;">OH</div>
<div style="position:absolute;left:833.60px;top:191.40px;width:83.10px;height:8.20px;border-radius:3.5px;background:linear-gradient(#9a9a9a 0%,#c9c9c9 30%,#cdcdcd 100%);box-shadow:inset 0 1px 1.5px rgba(0,0,0,.45), 0 1px 0 rgba(255,255,255,.35);"></div>
<div style="position:absolute;left:876.20px;top:192.60px;width:20.00px;height:6.60px;background:linear-gradient(#12c812 0,#28f028 45%,#10c010 100%);border-radius:1px;"></div>
<div style="position:absolute;left:873.00px;top:192.30px;width:3.20px;height:7.00px;background:#0a0a0a;"></div>
<div class="t" style="left:833.70px;top:202.00px;font-size:10.17px;color:#9c9c9c;transform:scaleX(0.6541);-webkit-text-stroke:0px;">L</div>
<div class="t" style="left:871.80px;top:202.00px;font-size:10.17px;color:#9c9c9c;transform:scaleX(0.8168);-webkit-text-stroke:0px;">C</div>
<div class="t" style="left:910.80px;top:202.00px;font-size:10.17px;color:#9c9c9c;transform:scaleX(0.7079);-webkit-text-stroke:0px;">R</div>
<div class="btn" style="position:absolute;left:838.00px;top:220.80px;width:75.80px;height:33.40px;"></div>
<div class="t" style="left:863.60px;top:231.00px;font-size:14.53px;color:#424242;transform:scaleX(0.8928);">Cue</div>
<div class="t" style="left:830.00px;top:263.00px;font-size:19.48px;color:#363636;transform:scaleX(0.9327);-webkit-text-stroke:0.4px;">8</div>
<div class="t" style="left:830.60px;top:284.00px;font-size:14.53px;color:#363636;transform:scaleX(0.8672);-webkit-text-stroke:0.35px;">Mic</div>
<div class="fp" style="position:absolute;left:866.90px;top:286.20px;width:47.30px;height:561.80px;"></div>
<div class="t" style="left:871.30px;top:350.00px;font-size:9.74px;color:#747474;transform:scaleX(0.7849);-webkit-text-stroke:0.35px;">10</div>
<div class="t" style="left:871.20px;top:397.00px;font-size:9.74px;color:#747474;transform:scaleX(0.8865);-webkit-text-stroke:0.35px;">5</div>
<div class="t" style="left:871.20px;top:490.00px;font-size:9.74px;color:#747474;transform:scaleX(0.8865);-webkit-text-stroke:0.35px;">5</div>
<div class="t" style="left:871.30px;top:534.00px;font-size:9.74px;color:#747474;transform:scaleX(0.7849);-webkit-text-stroke:0.35px;">10</div>
<div class="t" style="left:870.55px;top:613.00px;font-size:9.74px;color:#747474;transform:scaleX(0.8542);-webkit-text-stroke:0.35px;">20</div>
<div class="t" style="left:870.80px;top:742.00px;font-size:9.74px;color:#747474;transform:scaleX(0.8773);-webkit-text-stroke:0.35px;">40</div>
<svg class="abs" style="left:870.60px;top:810.5px" width="13" height="8" viewBox="0 0 13 8"><path d="M6,4 C4.7,1.9 3.5,1.5 2.6,1.5 C1.5,1.5 .7,2.6 .7,4 C.7,5.4 1.5,6.5 2.6,6.5 C3.5,6.5 4.7,6.1 6,4 C7.3,1.9 8.5,1.5 9.4,1.5 C10.5,1.5 11.3,2.6 11.3,4 C11.3,5.4 10.5,6.5 9.4,6.5 C8.5,6.5 7.3,6.1 6,4 Z" fill="none" stroke="#747474" stroke-width=".95" opacity=".85"/></svg>
<div style="position:absolute;left:853.80px;top:440.10px;width:59.80px;height:17.00px;background:rgba(100,100,100,.52);border-radius:2px 0 0 2px;"></div>
<div class="t" style="left:856.80px;top:444.00px;font-size:11.05px;color:#e6e6e6;transform:scaleX(0.8275);font-weight:bold;-webkit-text-stroke:0;">U</div>
<div style="position:absolute;left:866.80px;top:447.80px;width:23.00px;height:2.00px;background:#f4f4f4;"></div>
<div style="position:absolute;left:891.80px;top:447.90px;width:21.80px;height:1.80px;background:#505050;"></div>
<div class="trk" style="position:absolute;left:888.90px;top:312.50px;width:3.40px;height:507.00px;"></div>
<div style="position:absolute;left:830.00px;top:325.70px;width:32.20px;height:19.60px;background:linear-gradient(#ae0c0c,#a20404);border:1px solid #5a0000;box-sizing:border-box;border-radius:2px;box-shadow:1px 1px 1px rgba(0,0,0,.25);"></div>
<div class="t" style="left:834.40px;top:328.00px;font-size:14.53px;color:#ffb8b8;transform:scaleX(0.8895);-webkit-text-stroke:0;">48V</div>
<div style="position:absolute;left:828.60px;top:510.20px;width:13.10px;height:255.00px;background:linear-gradient(#292400 0,#2b2602 78.6px,#03240a 79.2px,#031f08 100%);border:1.6px solid #0b0b07;box-sizing:border-box;"></div>
<div style="position:absolute;left:826.80px;top:588.80px;width:16.50px;height:1.50px;background:#f0f0f0;"></div>
<div class="t" style="left:845.55px;top:583.00px;font-size:10.76px;color:#787878;transform:scaleX(0.8361);">0</div>
<svg class="abs" style="left:871.80px;top:545.55px;filter:drop-shadow(3px 3px 3.5px rgba(0,0,0,.5))" width="38" height="82" viewBox="0 0 38 82">  <g clip-path="url(#kclip)">
   <rect x="0" y="0" width="38" height="82" fill="#777"/>
   <rect x="0" y="0" width="38" height="13" fill="url(#kc)"/>
   <path d="M0,12.5 Q19,7.5 38,12.5 V41.5 H0 Z" fill="url(#kd)"/>
   <path d="M0,17 Q19,12.5 38,17" stroke="#7d8083" stroke-width=".8" fill="none" opacity=".8"/>
   <path d="M0,22 Q19,18 38,22" stroke="#85888a" stroke-width=".7" fill="none" opacity=".7"/>
   <path d="M0,27 Q19,24 38,27" stroke="#8e9092" stroke-width=".7" fill="none" opacity=".7"/>
   <path d="M0,32 Q19,30 38,32" stroke="#999" stroke-width=".7" fill="none" opacity=".7"/>
   <path d="M0,37 Q19,36 38,37" stroke="#a2a2a2" stroke-width=".7" fill="none" opacity=".7"/>
   <rect x="0" y="41.5" width="38" height="34" fill="url(#kl)"/>
   <path d="M0,47.2 Q19,49.4 38,47.2" stroke="#858585" stroke-width=".9" fill="none" opacity=".85"/>
   <path d="M0,54 Q19,57.2 38,54" stroke="#8c8c8c" stroke-width=".9" fill="none" opacity=".85"/>
   <path d="M0,60.4 Q19,64.6 38,60.4" stroke="#999" stroke-width=".9" fill="none" opacity=".85"/>
   <path d="M0,61.4 Q19,65.6 38,61.4" stroke="#f4f4f4" stroke-width=".9" fill="none" opacity=".8"/>
   <path d="M0,70.4 Q19,77.6 38,70.4 V82 H0 Z" fill="url(#kb)"/>
   <path d="M0,70.4 Q19,77.6 38,70.4" stroke="#5e5e5e" stroke-width="1.1" fill="none"/>
   <rect x="0" y="40.9" width="38" height="1.2" fill="#2c2c2c"/>
   <rect x="0" y="42.1" width="38" height=".9" fill="#c8c8c8" opacity=".8"/>
   <rect x="0" y="0" width="38" height="82" fill="url(#ksh)"/>
  </g>
  <path d="M3,.6 H35 Q37.4,.6 37.4,3 V79 Q37.4,81.4 35,81.4 H3 Q.6,81.4 .6,79 V64 C.6,57 5.4,53 5.4,46 V43.4 L4.2,41.5 L5.4,39.6 V38 C5.4,31 .6,27 .6,21 V3 Q.6,.6 3,.6 Z" fill="none" stroke="#2b2b2b" stroke-width="1.6"/></svg>
<div class="btn" style="position:absolute;left:838.00px;top:858.00px;width:75.80px;height:33.50px;"></div>
<div class="t" style="left:859.40px;top:868.00px;font-size:14.53px;color:#424242;transform:scaleX(1.0306);">Mute</div>
<div style="position:absolute;left:929.00px;top:119.00px;width:3.20px;height:781.00px;background:#141416;"></div>
<div style="position:absolute;left:932.20px;top:119.00px;width:105.20px;height:58.20px;background:linear-gradient(#5d6069 0%,#4b4e56 30%,#3b3d43 62%,#2e2f34 100%);"></div>
<div style="position:absolute;left:932.20px;top:177.20px;width:105.20px;height:2.00px;background:#1a1a1c;"></div>
<div style="position:absolute;left:932.20px;top:179.00px;width:105.20px;height:721.00px;background:linear-gradient(90deg,#5a5d66 0,#4c4f58 1.8px,#4b4e57 100%);"></div>
<div style="position:absolute;left:932.20px;top:179.00px;width:105.20px;height:5.00px;background:linear-gradient(rgba(0,0,0,.35),rgba(0,0,0,0));"></div>
<div style="position:absolute;left:1037.40px;top:119.00px;width:2.00px;height:781.00px;background:#121214;"></div>
<div class="t" style="left:966.10px;top:138.00px;font-size:18.17px;color:#eeeeee;transform:scaleX(0.9596);-webkit-text-stroke:0.4px;">Main</div>
<div class="btn" style="position:absolute;left:945.40px;top:220.80px;width:75.50px;height:33.40px;"></div>
<div class="t" style="left:970.60px;top:231.00px;font-size:14.39px;color:#454545;transform:scaleX(0.9018);">Cue</div>
<div class="t" style="left:938.00px;top:263.00px;font-size:19.19px;color:#e8e8e8;transform:scaleX(0.7369);-webkit-text-stroke:0;">L/R</div>
<div class="fpm" style="position:absolute;left:975.00px;top:287.50px;width:47.50px;height:560.00px;"></div>
<div class="t" style="left:979.20px;top:350.00px;font-size:9.74px;color:#8d9099;transform:scaleX(0.7849);">10</div>
<div class="t" style="left:979.70px;top:397.00px;font-size:9.74px;color:#8d9099;transform:scaleX(0.7388);">5</div>
<div class="t" style="left:979.70px;top:490.00px;font-size:9.74px;color:#8d9099;transform:scaleX(0.7388);">5</div>
<div class="t" style="left:979.20px;top:534.00px;font-size:9.74px;color:#8d9099;transform:scaleX(0.7849);">10</div>
<div class="t" style="left:978.45px;top:613.00px;font-size:9.74px;color:#8d9099;transform:scaleX(0.8542);">20</div>
<div class="t" style="left:978.70px;top:742.00px;font-size:9.74px;color:#8d9099;transform:scaleX(0.8773);">40</div>
<svg class="abs" style="left:978.50px;top:810.5px" width="13" height="8" viewBox="0 0 13 8"><path d="M6,4 C4.7,1.9 3.5,1.5 2.6,1.5 C1.5,1.5 .7,2.6 .7,4 C.7,5.4 1.5,6.5 2.6,6.5 C3.5,6.5 4.7,6.1 6,4 C7.3,1.9 8.5,1.5 9.4,1.5 C10.5,1.5 11.3,2.6 11.3,4 C11.3,5.4 10.5,6.5 9.4,6.5 C8.5,6.5 7.3,6.1 6,4 Z" fill="none" stroke="#8d9099" stroke-width=".95" opacity=".85"/></svg>
<div style="position:absolute;left:960.00px;top:440.00px;width:60.00px;height:16.50px;background:rgba(40,40,46,.6);"></div>
<div class="t" style="left:964.40px;top:444.00px;font-size:11.05px;color:#b4b4b8;transform:scaleX(0.7774);font-weight:bold;-webkit-text-stroke:0;">U</div>
<div style="position:absolute;left:973.60px;top:448.20px;width:8.00px;height:1.60px;background:#e4e4e4;"></div>
<div class="trk" style="position:absolute;left:996.40px;top:312.50px;width:3.40px;height:507.00px;"></div>
<div style="position:absolute;left:936.00px;top:510.40px;width:23.00px;height:254.80px;background:linear-gradient(#292400 0,#2b2602 78.6px,#042b0c 79.2px,#03260a 100%);border:1.5px solid #0a0a08;box-sizing:border-box;"></div>
<div style="position:absolute;left:946.40px;top:511.00px;width:2.30px;height:253.50px;background:#0a0a08;"></div>
<div style="position:absolute;left:933.20px;top:588.80px;width:28.50px;height:1.60px;background:#f0f0f0;"></div>
<div class="t" style="left:962.80px;top:583.00px;font-size:11.05px;color:#dcdcdc;transform:scaleX(0.8466);-webkit-text-stroke:0;">0</div>
<svg class="abs" style="left:978.6px;top:407.8px;filter:drop-shadow(3px 3px 3.5px rgba(0,0,0,.55))" width="38" height="82" viewBox="0 0 38 82">  <g clip-path="url(#kclip)">
   <rect x="0" y="0" width="38" height="82" fill="#777"/>
   <rect x="0" y="0" width="38" height="13" fill="url(#kc)"/>
   <path d="M0,12.5 Q19,7.5 38,12.5 V41.5 H0 Z" fill="url(#kd)"/>
   <path d="M0,17 Q19,12.5 38,17" stroke="#7d8083" stroke-width=".8" fill="none" opacity=".8"/>
   <path d="M0,22 Q19,18 38,22" stroke="#85888a" stroke-width=".7" fill="none" opacity=".7"/>
   <path d="M0,27 Q19,24 38,27" stroke="#8e9092" stroke-width=".7" fill="none" opacity=".7"/>
   <path d="M0,32 Q19,30 38,32" stroke="#999" stroke-width=".7" fill="none" opacity=".7"/>
   <path d="M0,37 Q19,36 38,37" stroke="#a2a2a2" stroke-width=".7" fill="none" opacity=".7"/>
   <rect x="0" y="41.5" width="38" height="34" fill="url(#kl)"/>
   <path d="M0,47.2 Q19,49.4 38,47.2" stroke="#858585" stroke-width=".9" fill="none" opacity=".85"/>
   <path d="M0,54 Q19,57.2 38,54" stroke="#8c8c8c" stroke-width=".9" fill="none" opacity=".85"/>
   <path d="M0,60.4 Q19,64.6 38,60.4" stroke="#999" stroke-width=".9" fill="none" opacity=".85"/>
   <path d="M0,61.4 Q19,65.6 38,61.4" stroke="#f4f4f4" stroke-width=".9" fill="none" opacity=".8"/>
   <path d="M0,70.4 Q19,77.6 38,70.4 V82 H0 Z" fill="url(#kb)"/>
   <path d="M0,70.4 Q19,77.6 38,70.4" stroke="#5e5e5e" stroke-width="1.1" fill="none"/>
   <rect x="0" y="40.9" width="38" height="1.2" fill="#2c2c2c"/>
   <rect x="0" y="42.1" width="38" height=".9" fill="#c8c8c8" opacity=".8"/>
   <rect x="0" y="0" width="38" height="82" fill="url(#ksh)"/>
  </g>
  <path d="M3,.6 H35 Q37.4,.6 37.4,3 V79 Q37.4,81.4 35,81.4 H3 Q.6,81.4 .6,79 V64 C.6,57 5.4,53 5.4,46 V43.4 L4.2,41.5 L5.4,39.6 V38 C5.4,31 .6,27 .6,21 V3 Q.6,.6 3,.6 Z" fill="none" stroke="#2b2b2b" stroke-width="1.6"/></svg>
<div class="btn" style="position:absolute;left:945.40px;top:858.00px;width:75.50px;height:33.50px;"></div>
<div class="t" style="left:966.40px;top:868.00px;font-size:14.10px;color:#454545;transform:scaleX(1.0529);">Mute</div>
<div style="position:absolute;left:1039.40px;top:28.00px;width:328.10px;height:872.00px;background:linear-gradient(90deg,#e2e2e2 0,#dedede 3.8px,#d3d3d3 5px,#d3d3d3 calc(100% - 1.6px),#e6e6e6 calc(100% - 1.4px));"></div>
<div style="position:absolute;left:1039.40px;top:28.00px;width:328.10px;height:29.50px;background:linear-gradient(#dedede,#d6d6d6);"></div>
<div style="position:absolute;left:1039.40px;top:57.40px;width:328.10px;height:29.20px;background:linear-gradient(#4a4a4a 0,#8c8c8c 6%,#8e8e8e 30%,#888 70%,#7a7a7a 100%);"></div>
<div style="position:absolute;left:1039.40px;top:57.40px;width:51.80px;height:29.20px;background:linear-gradient(#444 0,#707070 7%,#727272 40%,#6c6c6c 70%,#5a5a5a 100%);box-shadow:1.5px 0 1.5px rgba(0,0,0,.4);"></div>
<div style="position:absolute;left:1039.40px;top:86.40px;width:328.10px;height:30.00px;background:linear-gradient(#303030 0,#565656 7%,#555 80%,#484848 100%);"></div>
<div style="position:absolute;left:1039.40px;top:86.40px;width:51.80px;height:30.00px;background:linear-gradient(#262626 0,#404040 8%,#3c3c3c 80%,#323232 100%);box-shadow:1.5px 0 1.5px rgba(0,0,0,.45);"></div>
<div style="position:absolute;left:1039.40px;top:115.80px;width:328.10px;height:1.60px;background:#161616;"></div>
<div class="t" style="left:1052.50px;top:64.00px;font-size:15.12px;color:#f0f0f0;transform:scaleX(0.8395);-webkit-text-stroke:0.4px;">Link:</div>
<div class="t" style="left:1103.75px;top:64.00px;font-size:15.12px;color:#e2e2e2;transform:scaleX(0.9186);-webkit-text-stroke:0.35px;">YourMixer</div>
<div class="t" style="left:1046.30px;top:94.00px;font-size:14.83px;color:#f0f0f0;transform:scaleX(0.8342);-webkit-text-stroke:0.5px;">Scene:</div>
<div class="t" style="left:1104.25px;top:94.00px;font-size:14.83px;color:#14b4f6;transform:scaleX(0.8618);-webkit-text-stroke:0.45px;">TM 16 Rock Band</div>
<div style="position:absolute;left:1344.25px;top:63.25px;width:17.75px;height:17.75px;border-radius:50%;background:#08f408;"></div>
<svg class="abs" style="left:1344.25px;top:63.25px" width="18" height="18" viewBox="0 0 18 18"><path d="M4,9.6 L6,8.8 L8.2,13.4 L10.6,4.4 H14.4" fill="none" stroke="#fff" stroke-width="1.6"/></svg>
<svg class="abs" style="left:1046px;top:35px" width="70" height="16" viewBox="1046 35 70 16">
 <g fill="none" stroke="#1c1c1c" stroke-width="3.1" stroke-linejoin="round">
  <path d="M1053,38.8 H1063.2 Q1066.4,38.8 1066.4,41.6 V44 Q1066.4,46.8 1063.2,46.8 H1053 Q1049.8,46.8 1049.8,44 V41.6 Q1049.8,38.8 1053,38.8 Z" stroke-width="3.4"/>
  <path d="M1060.4,45.6 L1063,48.6" stroke-width="2.4"/>
  <path d="M1089.6,38.8 H1075 Q1072.4,38.8 1072.4,40.8 Q1072.4,42.8 1075,42.8 H1085.8 Q1088.4,42.8 1088.4,44.8 Q1088.4,46.8 1085.8,46.8 H1071.2"/>
  <path d="M1111.6,38.8 H1098 Q1094.8,38.8 1094.8,41.6 V44 Q1094.8,46.8 1098,46.8 H1111.6"/>
 </g></svg>
<div class="t" style="left:1288.75px;top:36.00px;font-size:16.86px;color:#111;transform:scaleX(0.9459);font-weight:bold;">Touch</div>
<div class="t" style="left:1336.60px;top:36.00px;font-size:16.86px;color:#222;transform:scaleX(0.9402);">Mix</div>
<div class="sq" style="position:absolute;left:1168.00px;top:132.80px;width:73.80px;height:57.20px;"></div>
<div class="t" style="left:1186.40px;top:154.00px;font-size:15.12px;color:#222;transform:scaleX(0.9472);">Home</div>
<div class="sq" style="position:absolute;left:1168.00px;top:204.20px;width:73.60px;height:42.50px;"></div>
<div class="t" style="left:1187.20px;top:218.00px;font-size:15.12px;color:#222;transform:scaleX(0.9681);">Menu</div>
<div class="sq" style="position:absolute;left:1168.00px;top:261.70px;width:73.60px;height:42.50px;"></div>
<div class="t" style="left:1180.20px;top:269.00px;font-size:14.53px;color:#333;transform:scaleX(0.9823);">Record/</div>
<div class="t" style="left:1192.40px;top:283.00px;font-size:14.53px;color:#333;transform:scaleX(0.9268);">Play</div>
<div style="position:absolute;left:1125.00px;top:334.25px;width:151.25px;height:56.00px;background:#202020;border-radius:5px;"></div>
<div style="position:absolute;left:1099.50px;top:384.50px;width:208.00px;height:47.25px;background:#202020;border-radius:5px;"></div>
<svg class="abs" style="left:1099.5px;top:370px" width="208" height="20" viewBox="1099.5 370 208 20"><path d="M1125.5,372 V378 Q1125.5,384.5 1119,384.5 H1126 Z M1275.7,372 V378 Q1275.7,384.5 1282.2,384.5 H1275 Z" fill="#202020"/></svg>
<div class="lb" style="position:absolute;left:1131.80px;top:342.20px;width:61.00px;height:31.60px;"></div>
<div class="t" style="left:1144.00px;top:352.00px;font-size:12.65px;color:#333;transform:scaleX(0.9634);">Wizard</div>
<div class="lb" style="position:absolute;left:1209.00px;top:342.20px;width:61.20px;height:31.60px;"></div>
<div class="t" style="left:1229.50px;top:352.00px;font-size:12.65px;color:#333;transform:scaleX(0.9719);">Info</div>
<div class="lb" style="position:absolute;left:1106.00px;top:392.10px;width:61.20px;height:31.60px;"></div>
<div class="t" style="left:1127.00px;top:402.00px;font-size:12.21px;color:#333;transform:scaleX(0.9602);">Aux</div>
<div class="db" style="position:absolute;left:1172.80px;top:392.20px;width:60.60px;height:31.00px;"></div>
<div class="t" style="left:1197.30px;top:398.00px;font-size:12.50px;color:#d8d8d8;transform:scaleX(0.8200);-webkit-text-stroke:0;">FX</div>
<div class="t" style="left:1190.30px;top:408.00px;font-size:12.50px;color:#d8d8d8;transform:scaleX(0.9897);-webkit-text-stroke:0;">Mute</div>
<div class="lb" style="position:absolute;left:1240.20px;top:392.10px;width:61.40px;height:31.60px;"></div>
<div class="t" style="left:1257.40px;top:398.00px;font-size:12.50px;color:#3a3a3a;transform:scaleX(1.0004);">Mute</div>
<div class="t" style="left:1251.30px;top:408.00px;font-size:12.50px;color:#3a3a3a;transform:scaleX(0.9759);">Groups</div>
<div style="position:absolute;left:1168.25px;top:458.75px;width:69.25px;height:61.25px;background:#202020;border-radius:6px;"></div>
<div class="t" style="left:1183.00px;top:467.00px;font-size:11.63px;color:#d0d0d0;transform:scaleX(0.9278);-webkit-text-stroke:0.3px;">Talkback</div>
<div class="db" style="position:absolute;left:1172.80px;top:484.40px;width:60.60px;height:31.00px;"></div>
<div class="t" style="left:1193.00px;top:493.00px;font-size:13.52px;color:#e4e4e4;transform:scaleX(0.9143);-webkit-text-stroke:0.45px;">Talk</div>
<div class="dbo" style="position:absolute;left:1101.80px;top:484.10px;width:60.20px;height:31.00px;"></div>
<div class="t" style="left:1112.40px;top:493.00px;font-size:13.52px;color:#d8d8d8;transform:scaleX(0.8702);-webkit-text-stroke:0.45px;">Phones</div>
<div class="dbo" style="position:absolute;left:1244.30px;top:484.10px;width:60.60px;height:31.00px;"></div>
<div class="t" style="left:1253.30px;top:493.00px;font-size:13.52px;color:#d8d8d8;transform:scaleX(0.9561);-webkit-text-stroke:0.45px;">Monitor</div>
<svg class="abs" style="left:1168px;top:534px;filter:drop-shadow(1px 2px 1.5px rgba(0,0,0,.35))" width="70" height="122" viewBox="1168 534 70 122">
 <path d="M1200.3,541.4 Q1202.5,538.6 1204.7,541.4 L1229.2,572.2 Q1232,577 1226.6,577 H1178.4 Q1173,577 1175.8,572.2 Z" fill="url(#tri)" stroke="#2e2e2e" stroke-width="1.5" stroke-linejoin="round"/>
 <path d="M1200.3,648.1 Q1202.5,650.9 1204.7,648.1 L1229.2,617.3 Q1232,612.5 1226.6,612.5 H1178.4 Q1173,612.5 1175.8,617.3 Z" fill="url(#tri2)" stroke="#2e2e2e" stroke-width="1.5" stroke-linejoin="round"/>
 <path d="M1199.2,562.2 H1206.8 M1203,558.4 V566" stroke="#333" stroke-width="1.1"/>
 <path d="M1200.6,628.4 H1204.4" stroke="#333" stroke-width="1.3"/>
</svg>
<div style="position:absolute;left:1039.40px;top:595.20px;width:104.80px;height:2.50px;background:#fbfbfb;"></div>
<div style="position:absolute;left:1264.25px;top:595.20px;width:103.25px;height:2.50px;background:#fbfbfb;"></div>
<div class="t" style="left:1183.25px;top:587.00px;font-size:15.41px;color:#1e1e1e;transform:scaleX(0.9470);">Nudge</div>
<div class="lab" style="position:absolute;left:1110.00px;top:662.50px;width:84.25px;height:28.75px;"></div>
<div class="t" style="left:1122.40px;top:670.00px;font-size:14.83px;color:#444;transform:scaleX(0.9403);">Clear Clip</div>
<div class="lab" style="position:absolute;left:1211.75px;top:662.50px;width:84.00px;height:28.75px;"></div>
<div class="t" style="left:1223.40px;top:670.00px;font-size:14.83px;color:#444;transform:scaleX(0.9319);">Clear Cue</div>
<div class="lab" style="position:absolute;left:1098.75px;top:744.50px;width:84.25px;height:28.00px;"></div>
<div class="t" style="left:1116.60px;top:751.00px;font-size:14.83px;color:#444;transform:scaleX(0.9869);">Nav left</div>
<div class="lab" style="position:absolute;left:1223.75px;top:744.50px;width:83.75px;height:28.00px;"></div>
<div class="t" style="left:1236.80px;top:751.00px;font-size:14.83px;color:#444;transform:scaleX(0.9879);">Nav right</div>
<div class="circ" style="position:absolute;left:1133.50px;top:697.25px;width:35.50px;height:35.50px;"></div>
<div class="t" style="left:1142.85px;top:708.00px;font-size:14.83px;color:#333;transform:scaleX(0.9183);">U2</div>
<div class="circ" style="position:absolute;left:1234.75px;top:697.25px;width:35.50px;height:35.50px;"></div>
<div class="t" style="left:1244.10px;top:708.00px;font-size:14.83px;color:#333;transform:scaleX(0.9183);">U3</div>
<div class="circ" style="position:absolute;left:1121.75px;top:778.75px;width:35.50px;height:35.50px;"></div>
<div class="t" style="left:1131.10px;top:790.00px;font-size:14.83px;color:#333;transform:scaleX(0.9183);">U1</div>
<div class="circ" style="position:absolute;left:1246.75px;top:778.75px;width:35.50px;height:35.50px;"></div>
<div class="t" style="left:1256.10px;top:790.00px;font-size:14.83px;color:#333;transform:scaleX(0.9183);">U4</div>
<div style="position:absolute;left:1039.40px;top:824.60px;width:328.10px;height:1.20px;background:#4a4a4a;"></div>
<div style="position:absolute;left:1039.40px;top:825.80px;width:328.10px;height:1.60px;background:#ececec;"></div>
<div class="t" style="left:1127.40px;top:832.00px;font-size:13.95px;color:#3c3c3c;transform:scaleX(0.9342);">Zero</div>
<div class="circ" style="position:absolute;left:1122.00px;top:851.75px;width:40.00px;height:40.00px;"></div>
<div class="t" style="left:1138.60px;top:866.00px;font-size:13.95px;color:#333;transform:scaleX(0.9538);">0</div>
<div class="t" style="left:1211.75px;top:834.00px;font-size:15.12px;color:#333;transform:scaleX(0.9742);">Control Mode:</div>
<div class="t" style="left:1183.75px;top:866.00px;font-size:14.24px;color:#3c3c3c;transform:scaleX(0.9530);">Normal</div>
<div class="t" style="left:1286.75px;top:866.00px;font-size:14.24px;color:#3c3c3c;transform:scaleX(0.8572);">Fine</div>
<div style="position:absolute;left:1230.50px;top:861.50px;width:49.50px;height:22.00px;border-radius:11px;background:linear-gradient(#9c9c9c,#b4b4b4);box-shadow:inset 0 1px 2px rgba(0,0,0,.3);"></div>
<div style="position:absolute;left:1230.00px;top:860.40px;width:24.00px;height:24.00px;border-radius:50%;box-sizing:border-box;border:1px solid #6a6a6a;background:radial-gradient(circle at 45% 40%,#f0f0f0 0,#d8d8d8 50%,#aeaeae 100%);box-shadow:1px 1px 2px rgba(0,0,0,.35);"></div>
</body></html>
